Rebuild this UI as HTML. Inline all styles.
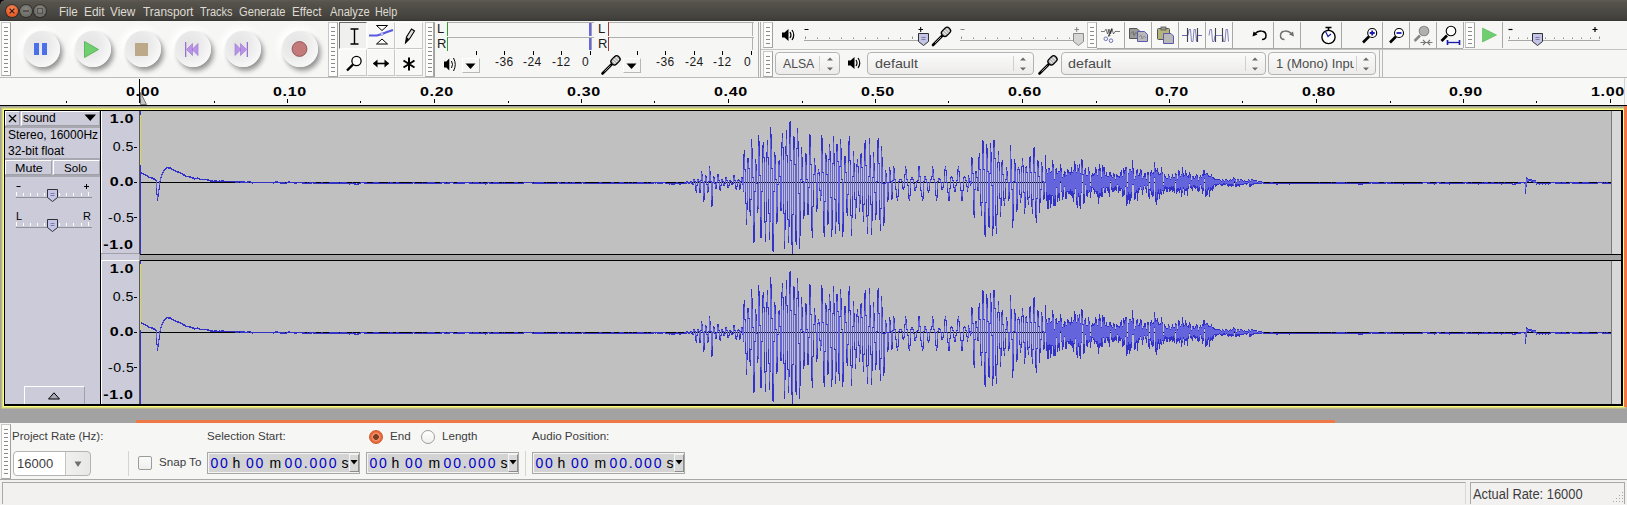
<!DOCTYPE html>
<html><head><meta charset="utf-8">
<style>
*{margin:0;padding:0;box-sizing:border-box}
html,body{width:1627px;height:505px;overflow:hidden;background:#f2f1f0;font-family:"Liberation Sans",sans-serif;position:relative}
.a{position:absolute}
.t{position:absolute;white-space:pre;line-height:1}
#menubar{left:0;top:0;width:1627px;height:21px;background:linear-gradient(#5e5b54 0,#56534c 12%,#4a4843 60%,#403e3a 92%,#353430 100%);}
.mi{position:absolute;top:5px;transform-origin:0 0;color:#dfdbd2;font-size:12px;line-height:14px;white-space:pre}
.wbtn{position:absolute;top:5px;width:12px;height:12px;border-radius:50%}
#tbarea{left:0;top:21px;width:1627px;height:57px;background:#f6f6f5}
.grab{position:absolute;width:10px;border:1px solid #c8c8c6;border-right-color:#a0a09e;border-bottom-color:#a8a8a6;background:#fdfdfd}
.grab:before{content:"";position:absolute;left:2px;width:4px;top:4px;bottom:3px;background:repeating-linear-gradient(#8a8a88 0 1px,transparent 1px 4px)}
.tb{position:absolute;width:36px;height:36px;border-radius:50%;background:radial-gradient(circle at 36% 36%,#e4e4e4 0,#ebebeb 40%,#f7f7f7 72%,#fdfdfd 100%);box-shadow:2.5px 3.5px 5px rgba(0,0,0,.42),-2px -2px 6px 3px rgba(255,255,255,.95)}
.btn{position:absolute;width:27px;height:27px;background:#f8f8f7;border:1px solid;border-color:#fdfdfd #c8c8c6 #c8c8c6 #fdfdfd}
.sep{position:absolute;width:1px;background:#c4c4c2}
.ml{position:absolute;font-size:12px;line-height:12px;color:#1a1a1a;white-space:pre}
#ruler{left:0;top:78px;width:1627px;height:27px;background:#f8f8f7}
.rl{position:absolute;top:86px;font-size:12px;font-weight:bold;letter-spacing:0.5px;transform:scaleX(1.34);transform-origin:0 0;line-height:12px;color:#000;white-space:pre}
.tk{position:absolute;width:1px;background:#000}
#trackarea{left:0;top:105px;width:1627px;height:318px;background:#a2a2a2;border-top:1px solid #000}
.lav{background:#cbcbd9}
.vr{position:absolute;font-size:12px;line-height:12px;color:#000;white-space:pre}
#seltb{left:0;top:423px;width:1627px;height:56px;background:#f6f6f5}
.sl{position:absolute;font-size:11.5px;line-height:12px;color:#3c3c3c;white-space:pre}
.tc{position:absolute;height:22px;border:1px solid #b0b0b0;background:#d2d2d2;box-shadow:inset 0 0 0 1px #e8e8e8}
.tcd{position:absolute;font-family:"Liberation Sans",sans-serif;font-size:14px;line-height:14px;white-space:pre;color:#0000cc;letter-spacing:1px}
#status{left:0;top:479px;width:1627px;height:26px;background:#f2f1f0;border-top:1px solid #a8a8a6}
</style></head><body>
<div id="menubar" class="a">
 <div class="a" style="left:0;top:0;width:4px;height:4px;background:radial-gradient(circle at 100% 100%,transparent 3px,#000 4px)"></div>
 <div class="wbtn" style="left:6px;background:radial-gradient(circle at 50% 35%,#f98b5d,#e4501e 80%);box-shadow:0 0 0 1px rgba(0,0,0,.35)"><svg class="a" style="left:0;top:0" width="12" height="12"><path d="M3.6 3.6L8.4 8.4M8.4 3.6L3.6 8.4" stroke="#3a1a0c" stroke-width="1.3"/></svg></div>
 <div class="wbtn" style="left:20px;background:radial-gradient(circle at 50% 35%,#86847e,#6b6964 80%);box-shadow:0 0 0 1px rgba(0,0,0,.35)"><div class="a" style="left:3px;top:5px;width:6px;height:2px;background:#55534e"></div></div>
 <div class="wbtn" style="left:34px;background:radial-gradient(circle at 50% 35%,#86847e,#6b6964 80%);box-shadow:0 0 0 1px rgba(0,0,0,.35)"><div class="a" style="left:3px;top:3px;width:6px;height:6px;border:1.5px solid #55534e"></div></div>
 <span class="mi" style="left:59px;transform:scaleX(0.97)">File</span>
 <span class="mi" style="left:84px;transform:scaleX(0.99)">Edit</span>
 <span class="mi" style="left:110px;transform:scaleX(0.98)">View</span>
 <span class="mi" style="left:143px;transform:scaleX(0.99)">Transport</span>
 <span class="mi" style="left:200px;transform:scaleX(0.91)">Tracks</span>
 <span class="mi" style="left:239px;transform:scaleX(0.93)">Generate</span>
 <span class="mi" style="left:292px;transform:scaleX(0.97)">Effect</span>
 <span class="mi" style="left:330px;transform:scaleX(0.93)">Analyze</span>
 <span class="mi" style="left:375px;transform:scaleX(0.9)">Help</span>
</div>
<div id="tbarea" class="a"></div>
<div class="a" style="left:0;top:77px;width:1627px;height:1px;background:#bcbcba"></div>
<!-- transport grabber -->
<div class="grab" style="left:1px;top:22px;height:54px"></div>
<div class="tb" style="left:23.5px;top:31px"></div>
<div class="tb" style="left:74.5px;top:31px"></div>
<div class="tb" style="left:124.5px;top:31px"></div>
<div class="tb" style="left:174.5px;top:31px"></div>
<div class="tb" style="left:224.5px;top:31px"></div>
<div class="tb" style="left:282px;top:31px"></div>
<svg class="a" style="left:0;top:21px" width="330" height="56">
 <g transform="translate(0,-21)">
 <rect x="34" y="43" width="5" height="12" fill="#4a6fe8"/><rect x="42" y="43" width="5" height="12" fill="#4a6fe8"/>
 <path d="M84.5 41.5L98.5 49.5L84.5 57.5Z" fill="#6fd06f" stroke="#4fa84f" stroke-width="0.8"/>
 <rect x="135" y="43" width="13" height="13" fill="#bba98a"/>
 <rect x="185" y="42" width="1.3" height="15" fill="#9a70d0"/>
 <path d="M186.5 49.5L192.5 43.5V55.5Z M192 49.5L198 43.5V55.5Z" fill="#b894e8" stroke="#9a70d0" stroke-width="0.6"/>
 <rect x="246.7" y="42" width="1.3" height="15" fill="#9a70d0"/>
 <path d="M246.5 49.5L240.5 43.5V55.5Z M241 49.5L235 43.5V55.5Z" fill="#b894e8" stroke="#9a70d0" stroke-width="0.6"/>
 <circle cx="299.5" cy="49" r="7.4" fill="#c47a7a" stroke="#8a4e4e" stroke-width="0.9"/>
 </g>
</svg>
<!-- tools -->
<div class="grab" style="left:328px;top:22px;height:55px"></div>
<div class="btn" style="left:339px;top:22px;width:28px;height:27px;border-color:#6a6a6a #fdfdfd #fdfdfd #6a6a6a;background:#f0f0ef"></div>
<div class="btn" style="left:367px;top:22px;width:28px"></div>
<div class="btn" style="left:395px;top:22px;width:28px"></div>
<div class="btn" style="left:339px;top:49px;width:28px"></div>
<div class="btn" style="left:367px;top:49px;width:28px"></div>
<div class="btn" style="left:395px;top:49px;width:28px"></div>
<svg class="a" style="left:339px;top:22px" width="84" height="56">
 <g transform="translate(-339,-22)">
 <path d="M350.5 29H358.5M354.5 29V44M350.5 44H358.5" stroke="#000" stroke-width="1.4" fill="none"/>
 <path d="M376.5 25.5H387.5L382 30.5Z M376.5 44H387.5L382 39Z" fill="#fff" stroke="#000" stroke-width="1"/>
 <path d="M369 35.5L377 35.5L382 34L387 32L393 30" stroke="#5a5ae0" stroke-width="2.2" fill="none"/>
 <circle cx="382" cy="34" r="1.3" fill="#fff" stroke="#5a5ae0" stroke-width=".6"/>
 <path d="M405.5 43L406.5 37L411.5 29L414.5 31L409.5 39Z" fill="#e0e0e0" stroke="#000" stroke-width="1.1"/>
 <path d="M405.5 43L406.5 37L409 39Z" fill="#000"/>
 <circle cx="356.5" cy="61" r="4.6" fill="#fff" stroke="#000" stroke-width="1.3"/>
 <path d="M353 64.5L347 70.5" stroke="#000" stroke-width="2.4"/>
 <path d="M373.5 63.5H388.5" stroke="#000" stroke-width="1.6"/>
 <path d="M373 63.5L377.5 59.5V67.5Z M389 63.5L384.5 59.5V67.5Z" fill="#000"/>
 <path d="M409 57.5V70.5M403.5 60.5L414.5 67.5M414.5 60.5L403.5 67.5" stroke="#000" stroke-width="2"/>
 </g>
</svg>
<div class="grab" style="left:425px;top:22px;height:55px"></div>
<!-- play meter -->
<div class="a" style="left:433px;top:22px;width:1px;height:55px;background:#a8a8a6"></div>
<div class="a" style="left:447px;top:22px;width:147px;height:1px;background:#b0b0ae"></div>
<div class="a" style="left:447px;top:37px;width:147px;height:1px;background:#b0b0ae"></div>
<div class="a" style="left:447px;top:22px;width:1px;height:14px;background:#30a030"></div>
<div class="a" style="left:447px;top:37px;width:1px;height:14px;background:#30a030"></div>
<div class="a" style="left:589px;top:23px;width:2px;height:13px;background:#6464f0"></div>
<div class="a" style="left:589px;top:38px;width:2px;height:12px;background:#6464f0"></div>
<div class="a" style="left:591px;top:23px;width:1px;height:13px;background:#a0a0a0"></div>
<div class="a" style="left:591px;top:38px;width:1px;height:12px;background:#a0a0a0"></div>
<span class="ml" style="left:437px;top:23px;font-size:13px">L</span>
<span class="ml" style="left:437px;top:38px;font-size:13px">R</span>
<svg class="a" style="left:433px;top:50px" width="330" height="28">
 <g transform="translate(-433,-50)" stroke="#000" stroke-width="1">
 <path d="M476.5 51V55M504.5 51V55M533.5 51V55M561.5 51V55M590.5 51V55"/>
 <path d="M637.5 51V55M665.5 51V55M694.5 51V55M722.5 51V55M751.5 51V55"/>
 </g>
</svg>
<span class="ml" style="left:495px;top:56px;letter-spacing:0.4px">-36</span>
<span class="ml" style="left:523px;top:56px;letter-spacing:0.4px">-24</span>
<span class="ml" style="left:552px;top:56px;letter-spacing:0.4px">-12</span>
<span class="ml" style="left:582px;top:56px">0</span>
<svg class="a" style="left:443px;top:56px" width="200" height="20">
 <g transform="translate(-443,-56)">
 <path d="M444 61.5H446.3L449.3 58.5V70.5L446.3 67.5H444Z" fill="#000"/>
 <path d="M451.5 61Q453.5 64.5 451.5 68M453.5 58Q457 64.5 453.5 71" stroke="#000" stroke-width="1" fill="none"/>
 </g>
</svg>
<div class="a" style="left:462px;top:58px;width:18px;height:15px;background:#f6f6f5;border:1px solid;border-color:#fff #b8b8b6 #b8b8b6 #fff"></div>
<svg class="a" style="left:462px;top:58px" width="18" height="15"><path d="M3.5 5.5H13.5L8.5 11Z" fill="#000"/></svg>
<!-- record meter -->
<div class="a" style="left:608px;top:22px;width:146px;height:1px;background:#b0b0ae"></div>
<div class="a" style="left:608px;top:37px;width:146px;height:1px;background:#b0b0ae"></div>
<div class="a" style="left:608px;top:22px;width:1px;height:14px;background:#a03838"></div>
<div class="a" style="left:608px;top:37px;width:1px;height:14px;background:#a03838"></div>
<div class="a" style="left:752px;top:23px;width:1px;height:13px;background:#b0b0ae"></div>
<div class="a" style="left:752px;top:38px;width:1px;height:12px;background:#b0b0ae"></div>
<span class="ml" style="left:598px;top:23px;font-size:13px">L</span>
<span class="ml" style="left:598px;top:38px;font-size:13px">R</span>
<span class="ml" style="left:656px;top:56px;letter-spacing:0.4px">-36</span>
<span class="ml" style="left:685px;top:56px;letter-spacing:0.4px">-24</span>
<span class="ml" style="left:713px;top:56px;letter-spacing:0.4px">-12</span>
<span class="ml" style="left:744px;top:56px">0</span>
<svg width="0" height="0" style="position:absolute"><defs><g id="mic">
<path d="M0.5 -0.5L9.5 -9.5" stroke="#000" stroke-width="2.6" stroke-linecap="round"/>
<path d="M2.5 -2.5L8.5 -8.5" stroke="#fff" stroke-width="0.6"/>
<rect x="10.2" y="-18.5" width="6.6" height="9.8" rx="3" transform="rotate(45 13.5 -13.6)" fill="#b8b8b8" stroke="#000" stroke-width="1.3"/>
<path d="M10.4 -13.4L13.4 -10.4M11.9 -15.4L15.4 -11.9M13.9 -16.9L16.9 -13.9" stroke="#fff" stroke-width="0.9"/>
</g></defs></svg>
<svg class="a" style="left:598px;top:52px" width="26" height="26"><use href="#mic" transform="translate(4,22)"/></svg>
<div class="a" style="left:623px;top:58px;width:18px;height:15px;background:#f6f6f5;border:1px solid;border-color:#fff #b8b8b6 #b8b8b6 #fff"></div>
<svg class="a" style="left:623px;top:58px" width="18" height="15"><path d="M3.5 5.5H13.5L8.5 11Z" fill="#000"/></svg>
<div class="a" style="left:758px;top:22px;width:1px;height:55px;background:#b0b0ae"></div>
<div class="a" style="left:760px;top:22px;width:1px;height:55px;background:#b0b0ae"></div>
<!-- mixer toolbar -->
<div class="grab" style="left:763px;top:22px;height:26px"></div>
<div class="a" style="left:761px;top:49px;width:866px;height:1px;background:#c4c4c2"></div>
<div class="grab" style="left:763px;top:51px;height:26px"></div>
<svg class="a" style="left:772px;top:22px" width="320" height="28">
 <g transform="translate(-772,-22)">
 <path d="M782 32.5H784.5L788.5 29V41L784.5 37.5H782Z" fill="#000"/>
 <path d="M790 32Q792 35 790 38M792 30Q795.5 35 792 40" stroke="#000" stroke-width="1.2" fill="none"/>
 <path d="M804 40.5H918" stroke="#a8a8a6" stroke-width="1"/>
 <path d="M805.5 36.5V39M817.5 37.5V39M829.5 37.5V39M841.5 37.5V39M853.5 37.5V39M865.5 37.5V39M877.5 37.5V39M888.5 37.5V39M900.5 37.5V39M912.5 36.5V39" stroke="#909090" stroke-width="1"/>
 <path d="M804.5 29.5H808.5" stroke="#000" stroke-width="1"/>
 <path d="M918.5 29.5H923M920.7 27V32" stroke="#000" stroke-width="1"/>
 <path d="M918.5 33.5H928.5V41.5L923.5 45.5L918.5 41.5Z" fill="#c4c4e6" stroke="#303030" stroke-width="1"/>
 <path d="M921.5 37.5H925.5M921.5 39.5H925.5" stroke="#6a6a90" stroke-width="0.8"/>
 <use href="#mic" transform="translate(932.5,45.5)"/>
 <path d="M960 40.5H1077" stroke="#a8a8a6" stroke-width="1"/>
 <path d="M961.5 36.5V39M973.5 37.5V39M985.5 37.5V39M997.5 37.5V39M1009.5 37.5V39M1021.5 37.5V39M1033.5 37.5V39M1045.5 37.5V39M1057.5 37.5V39M1069.5 37.5V39M1076.5 36.5V39" stroke="#909090" stroke-width="1"/>
 <path d="M960.5 29.5H964.5" stroke="#888" stroke-width="1"/>
 <path d="M1074.5 29.5H1079M1076.7 27V32" stroke="#888" stroke-width="1"/>
 <path d="M1073.5 33.5H1083.5V41.5L1078.5 45.5L1073.5 41.5Z" fill="#d6d6d6" stroke="#8a8a8a" stroke-width="1"/>
 </g>
</svg>
<!-- device toolbar -->
<div class="a" style="left:775px;top:52px;width:65px;height:23px;border:1px solid #b4b4b2;border-radius:4px;background:linear-gradient(#fbfbfb,#ecebea)"></div>
<div class="a" style="left:819px;top:56px;width:1px;height:15px;background:#d0d0ce"></div>
<span class="t" style="left:783px;top:57px;font-size:13px;color:#4c4c4c;transform:scaleX(.94);transform-origin:0 0">ALSA</span>
<svg class="a" style="left:824px;top:56px" width="12" height="16"><path d="M3 4.5L6 1.5L9 4.5ZM3 11.5L6 14.5L9 11.5Z" fill="#6a6a6a"/></svg>
<svg class="a" style="left:846px;top:53px" width="16" height="20">
 <path d="M2 7.5H4.5L8.5 4V16L4.5 12.5H2Z" fill="#000"/>
 <path d="M10 7Q12 10 10 13M12 5Q15.5 10 12 15" stroke="#000" stroke-width="1.2" fill="none"/>
</svg>
<div class="a" style="left:867px;top:52px;width:167px;height:23px;border:1px solid #b4b4b2;border-radius:4px;background:linear-gradient(#fbfbfb,#ecebea)"></div>
<div class="a" style="left:1013px;top:56px;width:1px;height:15px;background:#d0d0ce"></div>
<span class="t" style="left:875px;top:57px;font-size:13px;color:#4c4c4c;transform:scaleX(1.1);transform-origin:0 0">default</span>
<svg class="a" style="left:1017px;top:56px" width="12" height="16"><path d="M3 4.5L6 1.5L9 4.5ZM3 11.5L6 14.5L9 11.5Z" fill="#6a6a6a"/></svg>
<svg class="a" style="left:1036px;top:52px" width="24" height="26"><use href="#mic" transform="translate(3,22)"/></svg>
<div class="a" style="left:1061px;top:52px;width:205px;height:23px;border:1px solid #b4b4b2;border-radius:4px;background:linear-gradient(#fbfbfb,#ecebea)"></div>
<div class="a" style="left:1245px;top:56px;width:1px;height:15px;background:#d0d0ce"></div>
<span class="t" style="left:1068px;top:57px;font-size:13px;color:#4c4c4c;transform:scaleX(1.1);transform-origin:0 0">default</span>
<svg class="a" style="left:1249px;top:56px" width="12" height="16"><path d="M3 4.5L6 1.5L9 4.5ZM3 11.5L6 14.5L9 11.5Z" fill="#6a6a6a"/></svg>
<div class="a" style="left:1268px;top:52px;width:108px;height:23px;border:1px solid #b4b4b2;border-radius:4px;background:linear-gradient(#fbfbfb,#ecebea)"></div>
<div class="a" style="left:1356px;top:56px;width:1px;height:15px;background:#d0d0ce"></div>
<div class="a" style="left:1268px;top:52px;width:86px;height:23px;overflow:hidden"><span class="t" style="left:8px;top:5px;font-size:13px;color:#4c4c4c">1 (Mono) Input</span></div>
<svg class="a" style="left:1360px;top:56px" width="12" height="16"><path d="M3 4.5L6 1.5L9 4.5ZM3 11.5L6 14.5L9 11.5Z" fill="#6a6a6a"/></svg>
<div class="a" style="left:1379px;top:50px;width:1px;height:27px;background:#b8b8b6"></div>
<div class="a" style="left:1382px;top:50px;width:1px;height:27px;background:#b8b8b6"></div>
<!-- edit toolbar -->
<div class="grab" style="left:1087px;top:22px;height:26px"></div>
<div class="a" style="left:1097px;top:22px;width:135px;height:27px;background:#f8f8f7"></div>
<div class="a" style="left:1097px;top:48px;width:366px;height:1px;background:#a8a8a6"></div>
<svg class="a" style="left:1096px;top:21px" width="400" height="29">
 <g transform="translate(-1096,-21)">
 <path d="M1124.5 22V48M1151.5 22V48M1178.5 22V48M1205.5 22V48M1232.5 22V48M1273.5 22V48M1300.5 22V48M1341.5 22V48M1382.5 22V48M1409.5 22V48M1436.5 22V48M1463.5 22V48" stroke="#a8a8a6" stroke-width="1"/>
 <!-- cut -->
 <path d="M1101 31.5H1104.5L1106 29L1107.5 34L1109 29L1110.5 34L1112 29L1113.5 34L1115 31.5H1120" stroke="#444" stroke-width="0.7" fill="none"/>
 <path d="M1112 28.5L1108.5 36.5" stroke="#333" stroke-width="1.3"/>
 <path d="M1108 29.5L1110 36" stroke="#555" stroke-width="0.8"/>
 <circle cx="1105.8" cy="38.8" r="1.8" fill="none" stroke="#6464b4" stroke-width="0.9"/>
 <circle cx="1111" cy="40.7" r="1.8" fill="none" stroke="#6464b4" stroke-width="0.9"/>
 <!-- copy -->
 <path d="M1129.5 28.5H1137L1139.5 31V38.5H1129.5Z" fill="#9a9a9a" stroke="#555" stroke-width="1"/>
 <path d="M1137.5 31.5H1144.5L1147.5 34.5V41.5H1137.5Z" fill="#b8b8b8" stroke="#5a5ab0" stroke-width="1"/>
 <path d="M1139 37L1141 35L1142 39L1144 36L1146 38" stroke="#7a7a7a" stroke-width=".7" fill="none"/><path d="M1131 33.5L1133 31.5L1134 35.5L1136 32.5L1138 34.5" stroke="#5a5a5a" stroke-width=".7" fill="none"/>
 <!-- paste -->
 <rect x="1157.5" y="28.5" width="12" height="11" rx="1" fill="#b4b47c" stroke="#555" stroke-width="1"/>
 <rect x="1161" y="27" width="5" height="3" fill="#9a9a9a" stroke="#555" stroke-width=".8"/>
 <path d="M1163.5 33.5H1171L1173.5 36V43.5H1163.5Z" fill="#b8b8b8" stroke="#5a5ab0" stroke-width="1"/>
 <!-- trim -->
 <path d="M1182 35.5H1187.5M1197.5 35.5H1202" stroke="#6464b4" stroke-width="1"/>
 <path d="M1188 35.5L1189 29.5L1190.5 29.5L1191.5 41.5L1193 41.5L1194 29.5L1195.5 29.5L1196.5 41.5L1197 35.5" stroke="#6464b4" stroke-width="0.8" fill="none"/>
 <path d="M1187.5 28V42M1197.5 28V42" stroke="#444" stroke-width="1.1"/>
 <!-- silence -->
 <path d="M1209 35.5L1210 29.5L1211.5 29.5L1212.5 41.5L1214 41.5L1215 35.5H1222.5L1223.5 41.5L1225 41.5L1226 29.5L1227.5 29.5L1228.5 41.5" stroke="#6464b4" stroke-width="0.8" fill="none"/>
 <path d="M1215.5 28V42M1222.5 28V42" stroke="#444" stroke-width="1.1"/>
 <!-- undo / redo -->
 <path d="M1254.5 34Q1258 30.5 1261.5 31Q1266 31.5 1266 35.5Q1266 39.5 1262 39.5" stroke="#000" stroke-width="1.5" fill="none"/>
 <path d="M1252.5 36.5L1253.5 31.5L1257.5 34.5Z" fill="#000"/>
 <path d="M1292 34Q1288.5 30.5 1285 31Q1280.5 31.5 1280.5 35.5Q1280.5 39.5 1284.5 39.5" stroke="#707070" stroke-width="1.5" fill="none"/>
 <path d="M1294 36.5L1293 31.5L1289 34.5Z" fill="#707070"/>
 <!-- timer -->
 <circle cx="1328.5" cy="37" r="6.6" fill="#fff" stroke="#000" stroke-width="1.4"/>
 <path d="M1325.5 27.5H1331.5M1328.5 27.5V30.5" stroke="#000" stroke-width="1.6"/>
 <path d="M1325.5 31.5L1328 36.5L1331 34" stroke="#1a1ab0" stroke-width="1.2" fill="none"/>
 <!-- zoom in -->
 <path d="M1369 36.5L1363 42.5" stroke="#000" stroke-width="2.6"/>
 <circle cx="1372.2" cy="33" r="4.5" fill="#fff" stroke="#000" stroke-width="1.1"/>
 <path d="M1369.7 33H1374.7M1372.2 30.5V35.5" stroke="#1a1ab0" stroke-width="1.8"/>
 <!-- zoom out -->
 <path d="M1396 36.5L1390 42.5" stroke="#000" stroke-width="2.6"/>
 <circle cx="1399" cy="33" r="4.5" fill="#fff" stroke="#000" stroke-width="1.1"/>
 <path d="M1396.5 33H1401.5" stroke="#1a1ab0" stroke-width="1.8"/>
 <!-- fit sel -->
 <path d="M1420 35.5L1414.5 41" stroke="#888" stroke-width="2.6"/>
 <circle cx="1424" cy="31" r="4.8" fill="#b0b0b0" stroke="#888" stroke-width="1.1"/>
 <path d="M1420.5 42.5H1432.5" stroke="#777" stroke-width="1"/>
 <path d="M1423 40L1425.5 42.5L1423 45M1430 40L1427.5 42.5L1430 45" stroke="#777" stroke-width="1.1" fill="none"/>
 <!-- fit -->
 <path d="M1447 35.5L1441.5 41" stroke="#000" stroke-width="2.6"/>
 <circle cx="1451" cy="31" r="4.8" fill="#fff" stroke="#000" stroke-width="1.1"/>
 <path d="M1447.5 42.5H1460" stroke="#1a1ab0" stroke-width="1.3"/>
 <path d="M1447.5 40V45M1459.5 40V45" stroke="#1a1ab0" stroke-width="1.6"/>
 </g>
</svg>
<!-- play at speed -->
<div class="grab" style="left:1465px;top:22px;height:26px"></div>
<svg class="a" style="left:1475px;top:22px" width="152" height="27">
 <g transform="translate(-1475,-22)">
 <path d="M1502.5 22V48" stroke="#a8a8a6" stroke-width="1"/>
 <path d="M1482.5 28L1496.5 35L1482.5 42Z" fill="#6fcf6f" stroke="#58b058" stroke-width=".6"/>
 <path d="M1508.5 29.5H1512.5" stroke="#000" stroke-width="1.2"/>
 <path d="M1592.5 29.5H1597.5M1595 27V32" stroke="#000" stroke-width="1.2"/>
 <path d="M1508 40.5H1600" stroke="#a8a8a6" stroke-width="1"/>
 <path d="M1509.5 36.5V39M1518.5 37.5V39M1527.5 37.5V39M1545.5 37.5V39M1554.5 37.5V39M1563.5 37.5V39M1572.5 37.5V39M1581.5 37.5V39M1590.5 37.5V39M1599.5 36.5V39" stroke="#909090" stroke-width="1"/>
 <path d="M1532.5 33.5H1542.5V41.5L1537.5 45.5L1532.5 41.5Z" fill="#c4c4e6" stroke="#303030" stroke-width="1"/>
 <path d="M1535.5 37.5H1539.5M1535.5 39.5H1539.5" stroke="#6a6a90" stroke-width="0.8"/>
 </g>
</svg>
<div id="ruler" class="a"></div>
<span class="rl" style="left:126px">0.00</span>
<span class="rl" style="left:273px">0.10</span>
<span class="rl" style="left:420px">0.20</span>
<span class="rl" style="left:567px">0.30</span>
<span class="rl" style="left:714px">0.40</span>
<span class="rl" style="left:861px">0.50</span>
<span class="rl" style="left:1008px">0.60</span>
<span class="rl" style="left:1155px">0.70</span>
<span class="rl" style="left:1302px">0.80</span>
<span class="rl" style="left:1449px">0.90</span>
<span class="rl" style="left:1590.5px">1.00</span>
<svg class="a" style="left:0;top:78px" width="1627" height="27"><g transform="translate(0,-78)"><path d="M140.5 99V103 M287.5 99V103 M434.5 99V103 M581.5 99V103 M728.5 99V103 M875.5 99V103 M1022.5 99V103 M1169.5 99V103 M1316.5 99V103 M1463.5 99V103 M1610.5 99V103 M66.5 101V103 M214.5 101V103 M360.5 101V103 M508.5 101V103 M654.5 101V103 M802.5 101V103 M948.5 101V103 M1096.5 101V103 M1242.5 101V103 M1390.5 101V103 M1536.5 101V103" stroke="#000" stroke-width="1"/><path d="M139.5 79V103" stroke="#000" stroke-width="1"/><path d="M1624.5 78V105" stroke="#d4d4d2" stroke-width="1"/><path d="M140.5 92.5L146.5 104.5H140.5Z" fill="#c4c4c4" stroke="#606060" stroke-width=".8"/></g></svg>
<div id="trackarea" class="a"></div>
<div class="a" style="left:136px;top:420px;width:1199px;height:3px;background:#f07846"></div>
<div class="a" style="left:1px;top:107px;width:1625px;height:302px;border:1px solid #b9b98c"></div>
<div class="a" style="left:2px;top:108px;width:1623px;height:300px;border:1px solid #dada80"></div>
<div class="a" style="left:3px;top:109px;width:1621px;height:298px;border:1px solid #ffff80"></div>
<div class="a" style="left:1624px;top:106px;width:3px;height:301px;background:#f07846"></div>
<div class="a" style="left:4px;top:110px;width:1619px;height:296px;border:1px solid #000;border-right-width:2px;border-bottom-width:2px"></div>
<!-- track control panel -->
<div class="a lav" style="left:5px;top:111px;width:95px;height:293px"></div>
<div class="a" style="left:100px;top:111px;width:1px;height:293px;background:#000"></div>
<!-- close & name -->
<div class="a lav" style="left:5px;top:111px;width:15px;height:15px;border:1px solid;border-color:#fff #a0a0a8 #a0a0a8 #fff"></div>
<svg class="a" style="left:5px;top:111px" width="15" height="15"><path d="M4 4L11 11M11 4L4 11" stroke="#000" stroke-width="1.3"/></svg>
<div class="a lav" style="left:21px;top:111px;width:79px;height:15px;border:1px solid;border-color:#fff #a0a0a8 #a0a0a8 #fff"></div>
<span class="t" style="left:23px;top:112px;font-size:12px;color:#000">sound</span>
<svg class="a" style="left:84px;top:114px" width="13" height="8"><path d="M0.5 0.5H12L6.25 7Z" fill="#000"/></svg>
<div class="a" style="left:5px;top:126px;width:95px;height:2px;background:#a8a8b0"></div>
<span class="t" style="left:8px;top:129px;font-size:12px;color:#000">Stereo, 16000Hz</span>
<span class="t" style="left:8px;top:145px;font-size:12px;color:#000">32-bit float</span>
<div class="a" style="left:5px;top:158px;width:95px;height:2px;background:#a8a8b0"></div>
<div class="a lav" style="left:5px;top:160px;width:47px;height:15px;border:1px solid;border-color:#fff #a0a0a8 #a0a0a8 #fff"></div>
<div class="a lav" style="left:53px;top:160px;width:47px;height:15px;border:1px solid;border-color:#fff #a0a0a8 #a0a0a8 #fff"></div>
<span class="t" style="left:15px;top:162px;font-size:11.6px;color:#000;transform:scaleX(1.08);transform-origin:0 0">Mute</span>
<span class="t" style="left:64px;top:162px;font-size:11.6px;color:#000">Solo</span>
<div class="a" style="left:5px;top:175px;width:95px;height:2px;background:#a8a8b0"></div>
<svg class="a" style="left:5px;top:180px" width="95" height="55">
 <g transform="translate(-5,-180)">
 <path d="M16.5 186.5H20.5" stroke="#000" stroke-width="1"/>
 <path d="M84 186.5H89M86.5 184V189" stroke="#000" stroke-width="1"/>
 <path d="M16 197.5H92" stroke="#909098" stroke-width="1"/>
 <path d="M16.5 192V196M23.5 193V196M30.5 193V196M37.5 193V196M44.5 193V196M59.5 193V196M66.5 193V196M73.5 193V196M81.5 193V196M88.5 192V196" stroke="#fff" stroke-width="1"/>
 <path d="M47.5 189.5H57.5V197.5L52.5 201.5L47.5 197.5Z" fill="#c4c4e6" stroke="#303030" stroke-width="1"/>
 <path d="M50.5 193.5H54.5M50.5 195.5H54.5" stroke="#6a6a90" stroke-width="0.8"/>
 <path d="M16 227.5H92" stroke="#909098" stroke-width="1"/>
 <path d="M16.5 222V226M23.5 223V226M30.5 223V226M37.5 223V226M44.5 223V226M59.5 223V226M66.5 223V226M73.5 223V226M81.5 223V226M88.5 222V226" stroke="#fff" stroke-width="1"/>
 <path d="M47.5 219.5H57.5V227.5L52.5 231.5L47.5 227.5Z" fill="#c4c4e6" stroke="#303030" stroke-width="1"/>
 <path d="M50.5 223.5H54.5M50.5 225.5H54.5" stroke="#6a6a90" stroke-width="0.8"/>
 </g>
</svg>
<span class="t" style="left:16px;top:211px;font-size:11px;color:#000">L</span>
<span class="t" style="left:83px;top:211px;font-size:11px;color:#000">R</span>
<!-- collapse button -->
<div class="a lav" style="left:24px;top:386px;width:61px;height:18px;border:1px solid;border-color:#fff #a0a0a8 #a0a0a8 #fff;border-bottom:none"></div>
<svg class="a" style="left:48px;top:392px" width="13" height="8"><path d="M0.5 7H11.5L6 0.8Z" fill="#a8a8b8" stroke="#000" stroke-width="1"/></svg>
<!-- vertical rulers -->
<div class="a lav" style="left:101px;top:111px;width:38px;height:293px"></div>
<div class="a" style="left:101px;top:111px;width:1px;height:143px;background:#fff"></div>
<div class="a" style="left:101px;top:253px;width:38px;height:1px;background:#a0a0a8"></div>
<div class="a" style="left:101px;top:260px;width:38px;height:1px;background:#fff"></div>
<div class="a" style="left:101px;top:261px;width:1px;height:143px;background:#fff"></div>
<div class="a" style="left:139px;top:111px;width:1px;height:143px;background:#555"></div>
<div class="a" style="left:139px;top:261px;width:1px;height:143px;background:#555"></div>
<span class="vr" style="right:1493px;top:113px;transform-origin:100% 0;font-weight:bold;transform:scaleX(1.34);letter-spacing:0.5px">1.0</span>
<span class="vr" style="right:1493px;top:141px;transform-origin:100% 0;font-weight:normal;transform:scaleX(1.18);letter-spacing:0.4px">0.5</span>
<span class="vr" style="right:1493px;top:176px;transform-origin:100% 0;font-weight:bold;transform:scaleX(1.34);letter-spacing:0.5px">0.0</span>
<span class="vr" style="right:1493px;top:212px;transform-origin:100% 0;font-weight:normal;transform:scaleX(1.18);letter-spacing:0.4px">-0.5</span>
<span class="vr" style="right:1493px;top:239px;transform-origin:100% 0;font-weight:bold;transform:scaleX(1.34);letter-spacing:0.5px">-1.0</span>
<span class="vr" style="right:1493px;top:263px;transform-origin:100% 0;font-weight:bold;transform:scaleX(1.34);letter-spacing:0.5px">1.0</span>
<span class="vr" style="right:1493px;top:291px;transform-origin:100% 0;font-weight:normal;transform:scaleX(1.18);letter-spacing:0.4px">0.5</span>
<span class="vr" style="right:1493px;top:326px;transform-origin:100% 0;font-weight:bold;transform:scaleX(1.34);letter-spacing:0.5px">0.0</span>
<span class="vr" style="right:1493px;top:362px;transform-origin:100% 0;font-weight:normal;transform:scaleX(1.18);letter-spacing:0.4px">-0.5</span>
<span class="vr" style="right:1493px;top:389px;transform-origin:100% 0;font-weight:bold;transform:scaleX(1.34);letter-spacing:0.5px">-1.0</span>
<svg class="a" style="left:0;top:0" width="140" height="410"><path d="M134 147.5H137 M134 182.5H137 M134 217.5H137 M134 297.5H137 M134 332.5H137 M134 367.5H137" stroke="#000" stroke-width="1"/></svg>
<div class="a" style="left:140px;top:111px;width:1471px;height:143px;background:#c0c0c0"></div>
<div class="a" style="left:1611px;top:111px;width:1px;height:143px;background:#7a7a7a"></div>
<div class="a" style="left:1612px;top:111px;width:9px;height:143px;background:#d8d8d8"></div>
<div class="a" style="left:140px;top:182px;width:1471px;height:1px;background:#000"></div>
<div class="a" style="left:140px;top:261px;width:1471px;height:143px;background:#c0c0c0"></div>
<div class="a" style="left:1611px;top:261px;width:1px;height:143px;background:#7a7a7a"></div>
<div class="a" style="left:1612px;top:261px;width:9px;height:143px;background:#d8d8d8"></div>
<div class="a" style="left:140px;top:332px;width:1471px;height:1px;background:#000"></div>
<div class="a" style="left:140px;top:254px;width:1481px;height:1px;background:#000"></div>
<div class="a" style="left:140px;top:255px;width:1481px;height:5px;background:#a6a6a6"></div>
<div class="a" style="left:140px;top:260px;width:1481px;height:1px;background:#000"></div>
<svg class="a" style="left:0;top:0" width="1627" height="410" shape-rendering="crispEdges"><path d="M141.5 172V174M142.5 173V174M143.5 173V175M144.5 174V175M145.5 174V176M146.5 175V176M147.5 175V177M148.5 176V178M149.5 177V178M150.5 177V178M151.5 177V179M152.5 177V179M153.5 178V180M154.5 178V180M155.5 179V181M156.5 180V195M157.5 194V201M158.5 189V197M159.5 181V190M160.5 177V182M161.5 174V178M162.5 172V175M163.5 170V173M164.5 169V171M165.5 168V170M166.5 167V169M167.5 167V168M168.5 167V169M169.5 167V169M170.5 167V169M171.5 168V170M172.5 169V170M173.5 169V171M174.5 170V171M175.5 170V172M176.5 171V172M177.5 171V173M178.5 171V173M179.5 172V173M180.5 172V174M181.5 173V174M182.5 173V175M183.5 174V176M184.5 174V176M185.5 175V177M186.5 176V177M187.5 176V177M188.5 176V177M189.5 176V178M190.5 176V178M191.5 177V178M192.5 177V179M193.5 177V179M194.5 178V180M195.5 178V179M196.5 178V179M197.5 177V179M198.5 178V179M199.5 178V180M200.5 179V180M201.5 179V180M202.5 179V180M203.5 179V180M204.5 179V180M205.5 179V180M206.5 179V180M207.5 179V181M208.5 179V181M209.5 180V181M210.5 180V182M211.5 180V182M212.5 180V182M213.5 181V182M214.5 180V182M215.5 180V182M216.5 180V182M217.5 181V182M218.5 181V182M219.5 180V182M220.5 181V182M221.5 180V182M222.5 180V182M223.5 180V182M224.5 181V182M225.5 181V182M226.5 181V182M227.5 181V182M228.5 181V182M229.5 181V182M230.5 181V182M231.5 181V182M232.5 181V182M233.5 181V182M234.5 181V182M235.5 181V183M236.5 181V183M237.5 181V183M238.5 181V183M239.5 181V182M240.5 181V183M241.5 181V183M242.5 181V183M243.5 181V183M244.5 181V183M245.5 182V183M246.5 182V183M247.5 181V183M248.5 181V183M249.5 181V182M250.5 181V183M251.5 182V183M252.5 182V184M253.5 182V183M254.5 182V183M255.5 182V183M256.5 182V183M257.5 182V183M258.5 182V183M259.5 182V183M260.5 182V183M261.5 182V183M262.5 182V183M263.5 182V183M264.5 182V183M265.5 182V183M266.5 182V183M267.5 182V183M268.5 182V183M269.5 182V183M270.5 182V183M271.5 182V183M272.5 182V183M273.5 182V184M274.5 182V183M275.5 181V183M276.5 181V183M277.5 181V183M278.5 182V183M279.5 182V183M280.5 182V184M281.5 182V184M282.5 182V184M283.5 182V184M284.5 182V184M285.5 183V184M286.5 182V184M287.5 182V183M288.5 181V183M289.5 181V183M290.5 182V183M291.5 182V183M292.5 182V183M293.5 182V183M294.5 182V184M295.5 182V184M296.5 182V184M297.5 182V183M298.5 182V183M299.5 182V183M300.5 182V183M301.5 182V183M302.5 182V184M303.5 182V184M304.5 182V184M305.5 183V184M306.5 183V184M307.5 182V184M308.5 183V184M309.5 182V184M310.5 182V184M311.5 182V184M312.5 182V183M313.5 182V184M314.5 182V184M315.5 182V184M316.5 183V184M317.5 183V184M318.5 183V184M319.5 183V184M320.5 183V184M321.5 182V184M322.5 182V184M323.5 183V184M324.5 183V184M325.5 183V184M326.5 183V184M327.5 183V184M328.5 183V184M329.5 182V184M330.5 182V184M331.5 182V184M332.5 182V184M333.5 182V184M334.5 182V184M335.5 182V184M336.5 182V184M337.5 182V184M338.5 182V184M339.5 183V184M340.5 182V184M341.5 182V184M342.5 182V184M343.5 182V184M344.5 182V184M345.5 182V184M346.5 182V184M347.5 183V184M348.5 183V184M349.5 183V185M350.5 183V184M351.5 183V184M352.5 182V184M353.5 183V184M354.5 183V185M355.5 183V185M356.5 184V185M357.5 183V185M358.5 183V185M359.5 183V184M360.5 182V184M361.5 182V183M362.5 182V183M363.5 182V183M364.5 182V184M365.5 182V184M366.5 182V184M367.5 183V184M368.5 183V184M369.5 183V184M370.5 183V184M371.5 183V184M372.5 183V184M373.5 182V184M374.5 182V184M375.5 182V184M376.5 182V184M377.5 182V184M378.5 182V184M379.5 183V184M380.5 183V184M381.5 183V184M382.5 183V184M383.5 183V184M384.5 183V184M385.5 183V184M386.5 183V184M387.5 183V184M388.5 182V184M389.5 183V184M390.5 182V184M391.5 182V184M392.5 182V184M393.5 183V184M394.5 183V184M395.5 183V184M396.5 182V184M397.5 182V184M398.5 182V184M399.5 183V184M400.5 183V184M401.5 183V184M402.5 183V184M403.5 183V184M404.5 183V184M405.5 183V184M406.5 183V184M407.5 183V184M408.5 183V184M409.5 183V184M410.5 183V184M411.5 183V184M412.5 182V184M413.5 182V183M414.5 182V184M415.5 183V184M416.5 183V184M417.5 183V184M418.5 183V184M419.5 183V184M420.5 183V184M421.5 183V184M422.5 182V184M423.5 183V184M424.5 183V184M425.5 183V184M426.5 183V184M427.5 182V184M428.5 182V184M429.5 182V184M430.5 182V184M431.5 182V184M432.5 182V184M433.5 182V184M434.5 182V184M435.5 183V184M436.5 183V184M437.5 183V184M438.5 183V184M439.5 183V184M440.5 182V184M441.5 182V184M442.5 182V183M443.5 182V183M444.5 182V184M445.5 182V184M446.5 183V184M447.5 182V184M448.5 182V184M449.5 182V184M450.5 182V183M451.5 182V183M452.5 182V183M453.5 182V184M454.5 183V184M455.5 183V184M456.5 183V184M457.5 182V184M458.5 182V184M459.5 182V184M460.5 182V184M461.5 182V184M462.5 182V184M463.5 182V184M464.5 182V184M465.5 182V183M466.5 182V183M467.5 182V183M468.5 182V183M469.5 182V184M470.5 182V184M471.5 182V184M472.5 183V184M473.5 182V184M474.5 182V184M475.5 182V184M476.5 182V184M477.5 182V184M478.5 182V184M479.5 183V184M480.5 183V184M481.5 182V184M482.5 182V184M483.5 183V184M484.5 183V184M485.5 183V185M486.5 183V184M487.5 182V184M488.5 182V183M489.5 182V184M490.5 182V184M491.5 183V184M492.5 183V184M493.5 182V184M494.5 182V184M495.5 182V184M496.5 182V184M497.5 182V184M498.5 182V184M499.5 183V184M500.5 183V184M501.5 183V184M502.5 182V184M503.5 183V184M504.5 182V184M505.5 183V184M506.5 183V184M507.5 183V184M508.5 183V184M509.5 183V184M510.5 183V184M511.5 183V184M512.5 183V184M513.5 183V184M514.5 182V184M515.5 182V184M516.5 182V184M517.5 182V184M518.5 183V184M519.5 183V184M520.5 183V184M521.5 183V184M522.5 183V184M523.5 182V184M524.5 182V183M525.5 182V183M526.5 182V183M527.5 182V183M528.5 182V183M529.5 182V183M530.5 182V183M531.5 182V183M532.5 182V184M533.5 183V184M534.5 182V184M535.5 182V184M536.5 182V184M537.5 182V184M538.5 182V184M539.5 182V184M540.5 182V184M541.5 182V184M542.5 182V184M543.5 182V184M544.5 183V184M545.5 183V184M546.5 182V184M547.5 183V184M548.5 183V184M549.5 183V184M550.5 183V184M551.5 183V184M552.5 183V184M553.5 183V184M554.5 183V184M555.5 183V184M556.5 183V184M557.5 182V184M558.5 182V183M559.5 182V184M560.5 182V184M561.5 183V184M562.5 183V184M563.5 183V184M564.5 183V184M565.5 182V184M566.5 182V184M567.5 182V184M568.5 183V184M569.5 183V184M570.5 182V184M571.5 183V184M572.5 182V184M573.5 182V184M574.5 182V184M575.5 183V184M576.5 183V184M577.5 183V184M578.5 183V184M579.5 183V184M580.5 183V184M581.5 182V184M582.5 182V183M583.5 182V184M584.5 182V184M585.5 183V184M586.5 183V184M587.5 183V184M588.5 183V184M589.5 183V184M590.5 183V184M591.5 183V184M592.5 183V184M593.5 183V184M594.5 183V184M595.5 183V184M596.5 183V184M597.5 183V184M598.5 183V184M599.5 182V184M600.5 182V184M601.5 182V184M602.5 183V184M603.5 183V184M604.5 183V184M605.5 183V184M606.5 183V184M607.5 183V184M608.5 183V184M609.5 183V184M610.5 183V184M611.5 182V184M612.5 182V184M613.5 182V184M614.5 183V184M615.5 183V184M616.5 183V184M617.5 183V184M618.5 183V184M619.5 182V184M620.5 182V184M621.5 182V184M622.5 182V184M623.5 182V184M624.5 183V184M625.5 183V184M626.5 183V184M627.5 183V184M628.5 182V184M629.5 183V184M630.5 183V184M631.5 183V184M632.5 182V184M633.5 183V184M634.5 183V184M635.5 183V184M636.5 183V184M637.5 182V184M638.5 182V184M639.5 182V184M640.5 182V184M641.5 182V184M642.5 182V184M643.5 182V184M644.5 183V184M645.5 183V184M646.5 183V184M647.5 182V184M648.5 183V184M649.5 183V184M650.5 183V184M651.5 182V184M652.5 182V184M653.5 182V184M654.5 182V183M655.5 182V184M656.5 182V183M657.5 182V184M658.5 182V184M659.5 182V184M660.5 182V184M661.5 182V184M662.5 182V184M663.5 182V183M664.5 182V183M665.5 182V184M666.5 183V184M667.5 183V184M668.5 183V184M669.5 183V185M670.5 183V184M671.5 183V185M672.5 183V185M673.5 183V185M674.5 183V185M675.5 183V184M676.5 182V184M677.5 182V184M678.5 183V184M679.5 183V185M680.5 183V185M681.5 183V184M682.5 183V184M683.5 183V184M684.5 182V184M685.5 182V184M686.5 181V184M687.5 181V183M688.5 182V184M689.5 182V184M690.5 181V183M691.5 181V184M692.5 183V185M693.5 179V185M694.5 179V182M695.5 181V191M696.5 185V193M697.5 179V186M698.5 179V182M699.5 181V193M700.5 180V193M701.5 171V181M702.5 174V183M703.5 182V202M704.5 181V200M705.5 175V182M706.5 176V185M707.5 184V193M708.5 181V192M709.5 166V182M710.5 171V182M711.5 181V207M712.5 182V206M713.5 176V183M714.5 177V184M715.5 183V189M716.5 182V189M717.5 174V183M718.5 174V181M719.5 180V190M720.5 185V191M721.5 179V186M722.5 179V182M723.5 181V186M724.5 183V186M725.5 177V184M726.5 177V181M727.5 180V188M728.5 185V188M729.5 180V186M730.5 180V182M731.5 181V185M732.5 183V185M733.5 175V184M734.5 175V181M735.5 180V189M736.5 186V190M737.5 180V187M738.5 179V181M739.5 180V190M740.5 181V189M741.5 177V182M742.5 177V185M743.5 154V192M744.5 150V170M745.5 169V204M746.5 203V225M747.5 158V210M748.5 158V169M749.5 168V212M750.5 199V216M751.5 139V200M752.5 148V178M753.5 177V243M754.5 191V242M755.5 159V192M756.5 164V184M757.5 183V213M758.5 135V209M759.5 141V176M760.5 175V238M761.5 191V238M762.5 145V192M763.5 142V158M764.5 157V223M765.5 221V242M766.5 152V222M767.5 140V158M768.5 157V214M769.5 213V240M770.5 127V222M771.5 134V169M772.5 168V251M773.5 191V252M774.5 152V192M775.5 155V180M776.5 179V224M777.5 184V222M778.5 161V185M779.5 160V177M780.5 176V211M781.5 142V211M782.5 133V148M783.5 147V214M784.5 213V249M785.5 146V230M786.5 130V156M787.5 155V220M788.5 219V243M789.5 122V227M790.5 121V161M791.5 160V245M792.5 214V254M793.5 136V215M794.5 137V165M795.5 164V242M796.5 148V245M797.5 128V149M798.5 141V194M799.5 193V249M800.5 179V236M801.5 147V180M802.5 157V182M803.5 181V219M804.5 182V216M805.5 153V183M806.5 154V180M807.5 179V215M808.5 187V215M809.5 134V188M810.5 135V165M811.5 164V231M812.5 206V238M813.5 174V207M814.5 158V175M815.5 165V183M816.5 182V212M817.5 173V209M818.5 169V174M819.5 172V191M820.5 190V201M821.5 135V196M822.5 138V173M823.5 172V233M824.5 201V237M825.5 153V202M826.5 155V175M827.5 174V225M828.5 159V224M829.5 144V160M830.5 151V198M831.5 197V237M832.5 163V230M833.5 136V164M834.5 153V200M835.5 199V234M836.5 144V222M837.5 144V162M838.5 161V224M839.5 166V231M840.5 139V167M841.5 148V180M842.5 179V237M843.5 182V232M844.5 156V183M845.5 156V173M846.5 172V213M847.5 194V216M848.5 141V195M849.5 136V161M850.5 160V216M851.5 215V236M852.5 176V218M853.5 151V177M854.5 163V200M855.5 199V219M856.5 164V208M857.5 159V167M858.5 166V196M859.5 195V212M860.5 154V204M861.5 153V168M862.5 167V212M863.5 204V222M864.5 143V205M865.5 140V166M866.5 165V217M867.5 215V234M868.5 176V216M869.5 138V177M870.5 155V205M871.5 204V235M872.5 177V221M873.5 152V178M874.5 163V193M875.5 192V220M876.5 181V215M877.5 140V182M878.5 138V164M879.5 163V220M880.5 208V231M881.5 146V209M882.5 157V184M883.5 183V226M884.5 183V223M885.5 170V184M886.5 173V183M887.5 182V202M888.5 182V200M889.5 167V183M890.5 170V182M891.5 181V200M892.5 180V199M893.5 166V181M894.5 168V180M895.5 179V190M896.5 189V198M897.5 196V201M898.5 181V197M899.5 179V182M900.5 179V180M901.5 179V182M902.5 181V189M903.5 187V190M904.5 174V188M905.5 166V175M906.5 169V180M907.5 179V186M908.5 185V199M909.5 195V201M910.5 179V196M911.5 177V180M912.5 177V180M913.5 179V184M914.5 183V191M915.5 187V191M916.5 181V188M917.5 180V182M918.5 166V181M919.5 166V177M920.5 176V191M921.5 190V197M922.5 196V201M923.5 181V199M924.5 176V182M925.5 176V180M926.5 179V183M927.5 182V191M928.5 190V193M929.5 182V191M930.5 179V183M931.5 176V180M932.5 166V177M933.5 169V180M934.5 179V183M935.5 182V196M936.5 195V201M937.5 181V198M938.5 178V182M939.5 178V180M940.5 179V183M941.5 182V190M942.5 187V190M943.5 182V188M944.5 169V183M945.5 166V171M946.5 170V183M947.5 182V193M948.5 192V201M949.5 188V201M950.5 177V189M951.5 176V178M952.5 177V181M953.5 180V188M954.5 187V192M955.5 185V192M956.5 180V186M957.5 169V181M958.5 166V172M959.5 171V183M960.5 182V191M961.5 190V201M962.5 190V201M963.5 177V191M964.5 176V178M965.5 177V181M966.5 180V187M967.5 186V192M968.5 175V188M969.5 178V182M970.5 181V186M971.5 157V184M972.5 158V174M973.5 173V215M974.5 189V218M975.5 171V190M976.5 171V178M977.5 177V191M978.5 157V191M979.5 153V170M980.5 169V206M981.5 202V216M982.5 140V203M983.5 141V170M984.5 169V235M985.5 202V237M986.5 144V203M987.5 148V172M988.5 171V227M989.5 173V228M990.5 143V174M991.5 152V186M992.5 185V236M993.5 140V229M994.5 140V159M995.5 158V226M996.5 214V234M997.5 162V215M998.5 151V163M999.5 162V199M1000.5 198V217M1001.5 162V206M1002.5 160V175M1003.5 174V201M1004.5 198V206M1005.5 179V199M1006.5 167V180M1007.5 171V183M1008.5 182V201M1009.5 182V199M1010.5 145V183M1011.5 159V190M1012.5 189V228M1013.5 181V221M1014.5 159V182M1015.5 163V183M1016.5 182V212M1017.5 169V210M1018.5 167V170M1019.5 169V195M1020.5 194V203M1021.5 166V198M1022.5 158V167M1023.5 165V193M1024.5 192V214M1025.5 167V208M1026.5 166V173M1027.5 172V200M1028.5 197V205M1029.5 157V198M1030.5 156V173M1031.5 172V207M1032.5 199V214M1033.5 148V200M1034.5 147V173M1035.5 172V218M1036.5 198V223M1037.5 160V199M1038.5 161V177M1039.5 176V213M1040.5 189V203M1041.5 162V190M1042.5 166V182M1043.5 181V200M1044.5 182V199M1045.5 155V183M1046.5 169V201M1047.5 173V209M1048.5 168V209M1049.5 168V200M1050.5 172V208M1051.5 171V204M1052.5 160V196M1053.5 164V206M1054.5 179V206M1055.5 169V206M1056.5 168V188M1057.5 173V202M1058.5 171V198M1059.5 171V201M1060.5 164V182M1061.5 168V192M1062.5 177V200M1063.5 174V197M1064.5 171V187M1065.5 172V199M1066.5 175V199M1067.5 169V192M1068.5 170V194M1069.5 172V194M1070.5 172V195M1071.5 167V196M1072.5 172V198M1073.5 170V202M1074.5 161V194M1075.5 164V189M1076.5 172V205M1077.5 165V208M1078.5 168V197M1079.5 164V206M1080.5 173V209M1081.5 159V193M1082.5 160V175M1083.5 174V204M1084.5 170V203M1085.5 168V185M1086.5 175V196M1087.5 175V197M1088.5 167V193M1089.5 171V192M1090.5 186V198M1091.5 175V192M1092.5 173V188M1093.5 174V190M1094.5 173V194M1095.5 167V192M1096.5 169V194M1097.5 175V197M1098.5 169V204M1099.5 164V198M1100.5 168V196M1101.5 177V197M1102.5 165V197M1103.5 167V188M1104.5 167V193M1105.5 175V193M1106.5 172V188M1107.5 176V191M1108.5 176V193M1109.5 172V197M1110.5 172V181M1111.5 175V190M1112.5 177V192M1113.5 173V192M1114.5 174V191M1115.5 179V190M1116.5 174V191M1117.5 175V185M1118.5 176V193M1119.5 176V191M1120.5 172V191M1121.5 170V189M1122.5 176V197M1123.5 168V196M1124.5 170V195M1125.5 167V187M1126.5 167V206M1127.5 187V204M1128.5 173V200M1129.5 169V204M1130.5 169V201M1131.5 171V198M1132.5 160V185M1133.5 168V185M1134.5 179V200M1135.5 176V199M1136.5 170V193M1137.5 169V201M1138.5 175V193M1139.5 173V190M1140.5 169V187M1141.5 170V190M1142.5 178V195M1143.5 176V190M1144.5 173V186M1145.5 173V189M1146.5 179V193M1147.5 172V186M1148.5 172V197M1149.5 189V199M1150.5 172V191M1151.5 170V195M1152.5 173V197M1153.5 172V196M1154.5 162V178M1155.5 168V202M1156.5 170V205M1157.5 168V200M1158.5 172V194M1159.5 174V199M1160.5 173V194M1161.5 167V195M1162.5 172V191M1163.5 185V194M1164.5 174V191M1165.5 176V189M1166.5 178V192M1167.5 178V192M1168.5 174V189M1169.5 176V192M1170.5 179V191M1171.5 177V190M1172.5 174V192M1173.5 177V191M1174.5 177V193M1175.5 173V181M1176.5 174V194M1177.5 179V192M1178.5 170V191M1179.5 171V193M1180.5 176V190M1181.5 174V197M1182.5 167V193M1183.5 173V189M1184.5 175V195M1185.5 170V191M1186.5 173V191M1187.5 176V196M1188.5 175V189M1189.5 172V184M1190.5 174V188M1191.5 180V189M1192.5 176V191M1193.5 176V187M1194.5 178V188M1195.5 176V189M1196.5 174V188M1197.5 175V191M1198.5 180V192M1199.5 177V191M1200.5 175V185M1201.5 177V189M1202.5 174V194M1203.5 170V191M1204.5 170V179M1205.5 174V197M1206.5 173V196M1207.5 173V195M1208.5 175V190M1209.5 176V197M1210.5 176V191M1211.5 174V190M1212.5 177V191M1213.5 177V189M1214.5 178V185M1215.5 179V187M1216.5 179V186M1217.5 179V185M1218.5 179V185M1219.5 179V184M1220.5 180V185M1221.5 181V186M1222.5 179V186M1223.5 180V185M1224.5 181V185M1225.5 179V185M1226.5 179V184M1227.5 180V186M1228.5 181V187M1229.5 180V186M1230.5 179V186M1231.5 180V187M1232.5 179V186M1233.5 177V186M1234.5 178V182M1235.5 179V187M1236.5 182V187M1237.5 179V186M1238.5 179V186M1239.5 181V187M1240.5 179V185M1241.5 179V185M1242.5 180V185M1243.5 181V185M1244.5 180V184M1245.5 181V184M1246.5 181V185M1247.5 181V184M1248.5 179V183M1249.5 180V187M1250.5 181V187M1251.5 179V186M1252.5 179V185M1253.5 180V185M1254.5 180V184M1255.5 180V184M1256.5 180V184M1257.5 182V184M1258.5 181V184M1259.5 181V184M1260.5 181V184M1261.5 181V184M1262.5 182V183M1263.5 182V184M1264.5 183V184M1265.5 183V184M1266.5 183V184M1267.5 183V184M1268.5 183V184M1269.5 183V184M1270.5 182V184M1271.5 182V184M1272.5 182V184M1273.5 183V184M1274.5 183V184M1275.5 183V184M1276.5 183V185M1277.5 183V185M1278.5 183V184M1279.5 183V184M1280.5 183V184M1281.5 183V184M1282.5 183V184M1283.5 183V184M1284.5 183V184M1285.5 183V184M1286.5 183V184M1287.5 183V184M1288.5 183V184M1289.5 183V185M1290.5 183V184M1291.5 183V184M1292.5 183V184M1293.5 183V184M1294.5 183V184M1295.5 183V184M1296.5 183V184M1297.5 183V184M1298.5 183V184M1299.5 183V184M1300.5 183V184M1301.5 183V184M1302.5 183V184M1303.5 183V184M1304.5 183V184M1305.5 183V184M1306.5 183V184M1307.5 183V184M1308.5 183V184M1309.5 183V184M1310.5 183V184M1311.5 183V184M1312.5 183V184M1313.5 183V184M1314.5 183V184M1315.5 183V184M1316.5 183V184M1317.5 183V184M1318.5 183V184M1319.5 182V184M1320.5 183V184M1321.5 183V184M1322.5 183V184M1323.5 183V184M1324.5 183V184M1325.5 183V184M1326.5 183V184M1327.5 183V184M1328.5 183V184M1329.5 183V184M1330.5 183V184M1331.5 182V184M1332.5 183V184M1333.5 183V184M1334.5 183V184M1335.5 183V184M1336.5 182V184M1337.5 182V184M1338.5 182V184M1339.5 182V184M1340.5 182V184M1341.5 182V184M1342.5 182V184M1343.5 182V184M1344.5 182V184M1345.5 183V184M1346.5 182V184M1347.5 183V184M1348.5 183V184M1349.5 183V184M1350.5 183V184M1351.5 183V184M1352.5 183V184M1353.5 183V184M1354.5 183V184M1355.5 183V184M1356.5 183V184M1357.5 183V184M1358.5 183V185M1359.5 183V185M1360.5 183V185M1361.5 183V185M1362.5 183V185M1363.5 183V184M1364.5 183V184M1365.5 183V184M1366.5 183V184M1367.5 183V184M1368.5 183V184M1369.5 182V184M1370.5 182V184M1371.5 182V183M1372.5 182V184M1373.5 182V184M1374.5 182V184M1375.5 182V184M1376.5 182V184M1377.5 182V184M1378.5 182V184M1379.5 183V184M1380.5 183V184M1381.5 183V184M1382.5 183V184M1383.5 183V184M1384.5 182V184M1385.5 182V184M1386.5 182V183M1387.5 182V184M1388.5 182V184M1389.5 182V184M1390.5 182V184M1391.5 183V184M1392.5 183V184M1393.5 182V184M1394.5 183V184M1395.5 183V184M1396.5 183V184M1397.5 183V184M1398.5 183V184M1399.5 183V184M1400.5 183V184M1401.5 183V184M1402.5 183V184M1403.5 183V185M1404.5 183V184M1405.5 183V184M1406.5 183V184M1407.5 183V184M1408.5 183V184M1409.5 183V184M1410.5 183V184M1411.5 183V184M1412.5 183V184M1413.5 183V184M1414.5 183V184M1415.5 183V184M1416.5 183V184M1417.5 183V184M1418.5 183V184M1419.5 183V184M1420.5 183V184M1421.5 183V184M1422.5 182V184M1423.5 182V183M1424.5 182V183M1425.5 182V183M1426.5 182V183M1427.5 182V184M1428.5 182V184M1429.5 182V184M1430.5 183V184M1431.5 183V184M1432.5 183V184M1433.5 183V184M1434.5 183V185M1435.5 183V184M1436.5 182V184M1437.5 182V183M1438.5 182V183M1439.5 182V184M1440.5 182V184M1441.5 183V184M1442.5 183V184M1443.5 183V184M1444.5 183V184M1445.5 182V184M1446.5 182V184M1447.5 182V184M1448.5 182V184M1449.5 183V185M1450.5 183V184M1451.5 183V184M1452.5 183V184M1453.5 183V184M1454.5 183V184M1455.5 183V184M1456.5 183V184M1457.5 183V184M1458.5 183V184M1459.5 183V184M1460.5 183V184M1461.5 183V184M1462.5 183V184M1463.5 182V184M1464.5 182V184M1465.5 182V183M1466.5 182V184M1467.5 182V184M1468.5 183V184M1469.5 183V184M1470.5 183V184M1471.5 182V184M1472.5 183V184M1473.5 183V184M1474.5 183V184M1475.5 183V184M1476.5 183V184M1477.5 183V184M1478.5 183V185M1479.5 183V184M1480.5 183V184M1481.5 183V184M1482.5 182V184M1483.5 183V184M1484.5 182V184M1485.5 182V184M1486.5 182V184M1487.5 182V184M1488.5 183V184M1489.5 183V184M1490.5 183V184M1491.5 182V184M1492.5 182V184M1493.5 182V184M1494.5 183V184M1495.5 183V184M1496.5 183V184M1497.5 183V184M1498.5 182V184M1499.5 183V184M1500.5 183V184M1501.5 183V185M1502.5 183V184M1503.5 183V184M1504.5 182V184M1505.5 183V184M1506.5 183V184M1507.5 183V184M1508.5 183V184M1509.5 183V184M1510.5 183V184M1511.5 183V184M1512.5 183V185M1513.5 184V185M1514.5 183V185M1515.5 183V185M1516.5 183V184M1517.5 183V184M1518.5 182V184M1519.5 182V184M1520.5 182V184M1521.5 182V183M1522.5 182V183M1523.5 182V183M1524.5 182V184M1525.5 182V194M1526.5 177V187M1527.5 178V182M1528.5 179V182M1529.5 179V181M1530.5 179V181M1531.5 179V182M1532.5 180V182M1533.5 180V183M1534.5 180V183M1535.5 180V183M1536.5 182V185M1537.5 183V184M1538.5 183V184M1539.5 183V185M1540.5 183V184M1541.5 183V184M1542.5 183V185M1543.5 183V184M1544.5 183V184M1545.5 183V185M1546.5 183V184M1547.5 183V184M1548.5 183V185M1549.5 183V184M1550.5 182V184M1551.5 182V183M1552.5 182V183M1553.5 182V183M1554.5 182V183M1555.5 182V184M1556.5 182V184M1557.5 182V184M1558.5 182V184M1559.5 182V184M1560.5 182V184M1561.5 183V184M1562.5 182V184M1563.5 182V184M1564.5 182V184M1565.5 182V184M1566.5 183V184M1567.5 183V184M1568.5 183V184M1569.5 182V184M1570.5 182V183M1571.5 182V183M1572.5 182V184M1573.5 182V184M1574.5 182V184M1575.5 182V184M1576.5 182V184M1577.5 182V184M1578.5 182V184M1579.5 183V184M1580.5 183V184M1581.5 183V184M1582.5 182V184M1583.5 182V184M1584.5 182V184M1585.5 182V184M1586.5 182V184M1587.5 182V184M1588.5 182V184M1589.5 183V184M1590.5 183V184M1591.5 183V184M1592.5 183V184M1593.5 183V184M1594.5 183V184M1595.5 183V184M1596.5 183V184M1597.5 182V184M1598.5 182V183M1599.5 182V183M1600.5 182V183M1601.5 182V183M1602.5 182V184M1603.5 183V184M1604.5 182V184M1605.5 183V184M1606.5 182V184M1607.5 182V184M1608.5 183V184M1609.5 183V184M1610.5 183V184" stroke="#3232c8" stroke-width="1" fill="none"/><path d="M156.5 181V188M157.5 195V198M158.5 190V193M159.5 182V185M160.5 178V181M161.5 175V177M162.5 173V174M163.5 171V172M686.5 182V183M691.5 182V183M693.5 180V184M694.5 180V181M695.5 182V186M696.5 186V190M697.5 180V184M698.5 180V181M699.5 182V188M700.5 181V190M701.5 173V180M702.5 176V182M703.5 183V196M704.5 182V193M705.5 177V181M706.5 178V184M707.5 185V191M708.5 182V187M709.5 168V181M710.5 175V181M711.5 182V200M712.5 183V196M713.5 178V182M714.5 179V183M715.5 184V187M716.5 183V185M717.5 177V182M718.5 177V180M719.5 181V186M720.5 186V188M721.5 180V184M722.5 180V181M723.5 182V184M724.5 184V185M725.5 179V183M726.5 178V180M727.5 181V184M728.5 186V187M729.5 181V183M731.5 182V183M733.5 178V183M734.5 177V180M735.5 181V185M736.5 187V188M737.5 181V184M739.5 181V185M740.5 182V184M741.5 178V181M742.5 179V184M743.5 169V191M744.5 157V169M745.5 172V192M746.5 204V219M747.5 163V201M748.5 162V168M749.5 169V198M750.5 200V210M751.5 147V199M752.5 159V177M753.5 178V225M754.5 192V222M755.5 163V191M756.5 171V183M757.5 184V206M758.5 146V208M759.5 156V175M760.5 176V217M761.5 192V220M762.5 163V191M763.5 148V157M764.5 162V202M765.5 222V234M766.5 162V202M767.5 145V157M768.5 165V199M769.5 214V232M770.5 138V221M771.5 149V168M772.5 169V223M773.5 192V234M774.5 157V191M775.5 164V179M776.5 180V213M777.5 185V207M778.5 164V184M779.5 165V176M780.5 177V202M781.5 156V208M782.5 138V147M783.5 160V204M784.5 214V241M785.5 154V210M786.5 139V155M787.5 163V201M788.5 220V236M789.5 144V220M790.5 137V160M791.5 161V215M792.5 215V242M793.5 150V214M794.5 148V164M795.5 165V215M796.5 149V231M797.5 133V148M798.5 157V193M799.5 194V238M800.5 180V211M801.5 154V179M802.5 167V181M803.5 182V210M804.5 183V202M805.5 162V182M806.5 165V179M807.5 180V203M808.5 188V204M809.5 155V187M810.5 147V164M811.5 165V207M812.5 207V228M813.5 175V190M814.5 162V174M815.5 172V182M816.5 183V205M817.5 174V198M818.5 170V173M819.5 176V188M820.5 191V198M821.5 151V195M822.5 154V172M823.5 173V211M824.5 202V226M825.5 159V201M826.5 162V174M827.5 175V210M828.5 160V212M829.5 147V159M830.5 162V197M831.5 198V229M832.5 164V210M833.5 142V163M834.5 166V198M835.5 200V226M836.5 152V212M837.5 151V161M838.5 162V203M839.5 167V223M840.5 144V166M841.5 160V179M842.5 180V224M843.5 183V212M844.5 165V182M845.5 163V172M846.5 173V199M847.5 195V208M848.5 163V194M849.5 145V160M850.5 165V199M851.5 216V229M852.5 177V196M853.5 156V176M854.5 172V192M855.5 200V214M856.5 167V197M857.5 162V166M858.5 173V191M859.5 196V208M860.5 164V200M861.5 158V167M862.5 168V196M863.5 205V216M864.5 161V203M865.5 149V165M866.5 166V199M867.5 216V227M868.5 177V195M869.5 144V176M870.5 168V196M871.5 205V228M872.5 178V201M873.5 157V177M874.5 171V192M875.5 193V213M876.5 182V201M877.5 162V181M878.5 148V163M879.5 164V200M880.5 209V224M881.5 151V208M882.5 167V183M883.5 184V217M884.5 184V207M885.5 172V183M886.5 177V182M887.5 183V197M888.5 183V192M889.5 171V182M890.5 175V181M891.5 182V195M892.5 181V192M893.5 168V180M894.5 173V179M895.5 180V186M896.5 190V193M897.5 197V199M898.5 182V189M899.5 180V181M901.5 180V181M902.5 182V185M904.5 178V186M905.5 168V174M906.5 173V179M907.5 180V184M908.5 186V193M909.5 196V199M910.5 180V188M911.5 178V179M912.5 178V179M913.5 180V183M914.5 184V188M915.5 188V190M916.5 182V185M918.5 171V180M919.5 169V176M920.5 177V187M921.5 191V193M922.5 197V199M923.5 182V192M924.5 177V181M925.5 177V179M926.5 180V182M927.5 183V187M929.5 183V186M930.5 180V182M932.5 168V176M933.5 173V179M934.5 180V182M935.5 183V190M936.5 196V199M937.5 182V189M938.5 179V181M940.5 180V182M941.5 183V186M942.5 188V189M943.5 183V185M944.5 176V182M945.5 167V170M946.5 176V182M947.5 183V188M948.5 193V197M949.5 189V196M950.5 179V185M952.5 179V180M953.5 181V184M954.5 188V190M955.5 186V189M956.5 181V183M957.5 175V180M958.5 167V171M959.5 177V182M960.5 183V187M961.5 191V196M962.5 191V197M963.5 179V185M965.5 178V180M966.5 181V184M967.5 187V190M968.5 177V187M969.5 179V181M970.5 182V184M971.5 166V183M972.5 164V173M973.5 174V200M974.5 190V211M975.5 174V189M976.5 173V177M977.5 178V187M978.5 169V190M979.5 158V169M980.5 170V194M981.5 203V211M982.5 154V202M983.5 153V169M984.5 170V212M985.5 203V225M986.5 154V202M987.5 158V171M988.5 172V208M989.5 174V216M990.5 148V173M991.5 162V185M992.5 186V226M993.5 148V216M994.5 147V158M995.5 159V205M996.5 215V228M997.5 168V196M998.5 155V162M999.5 171V193M1000.5 199V212M1001.5 167V197M1002.5 165V174M1003.5 175V191M1004.5 199V203M1005.5 180V188M1006.5 170V179M1007.5 176V182M1008.5 183V196M1009.5 183V192M1010.5 151V182M1011.5 169V189M1012.5 190V219M1013.5 182V204M1014.5 164V181M1015.5 171V182M1016.5 183V204M1017.5 170V199M1018.5 168V169M1019.5 174V190M1020.5 195V200M1021.5 172V192M1022.5 161V166M1023.5 173V191M1024.5 193V209M1025.5 168V197M1026.5 168V172M1027.5 173V191M1028.5 198V202M1029.5 168V196M1030.5 162V172M1031.5 173V194M1032.5 200V209M1033.5 164V199M1034.5 157V172M1035.5 173V201M1036.5 199V215M1037.5 166V198M1038.5 168V176M1039.5 177V199M1040.5 190V198M1041.5 165V189M1042.5 172V181M1043.5 182V195M1044.5 183V192M1045.5 169V182M1046.5 172V192M1047.5 174V195M1048.5 169V195M1049.5 170V194M1050.5 173V195M1051.5 172V195M1052.5 167V195M1053.5 168V196M1054.5 180V199M1055.5 170V195M1056.5 174V187M1057.5 174V195M1058.5 172V193M1059.5 172V193M1060.5 171V181M1061.5 172V191M1062.5 178V192M1063.5 175V190M1064.5 177V186M1065.5 173V192M1066.5 176V191M1067.5 173V191M1068.5 173V191M1069.5 173V191M1070.5 175V189M1071.5 173V191M1072.5 173V191M1073.5 171V193M1074.5 170V193M1075.5 171V188M1076.5 173V197M1077.5 166V201M1078.5 171V193M1079.5 168V196M1080.5 174V195M1081.5 166V192M1082.5 168V174M1083.5 175V194M1084.5 171V194M1085.5 174V184M1086.5 176V190M1087.5 176V190M1088.5 171V192M1089.5 174V190M1090.5 187V192M1091.5 177V187M1092.5 176V187M1093.5 176V188M1094.5 175V189M1095.5 173V191M1096.5 173V191M1097.5 176V191M1098.5 170V194M1099.5 171V193M1100.5 171V193M1101.5 178V188M1102.5 172V192M1103.5 171V187M1104.5 174V190M1105.5 176V188M1106.5 176V187M1107.5 177V187M1108.5 177V187M1109.5 175V189M1110.5 176V180M1111.5 177V187M1112.5 178V188M1113.5 176V188M1114.5 177V187M1115.5 180V186M1116.5 177V187M1117.5 177V184M1118.5 177V187M1119.5 178V186M1120.5 176V188M1121.5 175V188M1122.5 177V189M1123.5 173V191M1124.5 174V190M1125.5 171V186M1126.5 169V195M1127.5 188V195M1128.5 174V192M1129.5 170V194M1130.5 170V194M1131.5 172V192M1132.5 169V184M1133.5 174V184M1134.5 180V193M1135.5 177V192M1136.5 174V190M1137.5 173V191M1138.5 176V188M1139.5 176V188M1140.5 173V186M1141.5 175V189M1142.5 179V190M1143.5 177V187M1144.5 177V185M1145.5 177V187M1146.5 180V188M1147.5 175V185M1148.5 175V189M1149.5 190V193M1150.5 176V188M1151.5 173V191M1152.5 174V192M1153.5 174V190M1154.5 167V177M1155.5 172V192M1156.5 171V198M1157.5 172V192M1158.5 175V189M1159.5 175V193M1160.5 175V189M1161.5 172V192M1162.5 174V190M1163.5 186V190M1164.5 177V187M1165.5 178V186M1166.5 179V187M1167.5 179V187M1168.5 176V188M1169.5 177V187M1170.5 180V187M1171.5 178V186M1172.5 177V187M1173.5 178V186M1174.5 178V188M1175.5 175V180M1176.5 175V189M1177.5 180V188M1178.5 176V188M1179.5 175V189M1180.5 177V187M1181.5 175V190M1182.5 173V191M1183.5 177V187M1184.5 176V189M1185.5 175V189M1186.5 176V188M1187.5 177V188M1188.5 178V186M1189.5 175V183M1190.5 178V186M1191.5 181V186M1192.5 177V187M1193.5 179V185M1194.5 179V185M1195.5 178V186M1196.5 176V187M1197.5 178V186M1198.5 181V188M1199.5 178V187M1200.5 177V184M1201.5 178V186M1202.5 176V188M1203.5 176V188M1204.5 175V178M1205.5 175V189M1206.5 174V191M1207.5 175V189M1208.5 177V187M1209.5 177V190M1210.5 177V187M1211.5 176V188M1212.5 178V186M1213.5 179V185M1214.5 180V184M1215.5 180V184M1216.5 180V184M1217.5 180V184M1218.5 180V184M1219.5 180V183M1220.5 181V184M1221.5 182V184M1222.5 180V184M1223.5 181V183M1224.5 182V183M1225.5 180V184M1226.5 180V183M1227.5 181V184M1228.5 182V184M1229.5 181V184M1230.5 180V184M1231.5 181V184M1232.5 180V184M1233.5 179V185M1234.5 179V181M1235.5 180V184M1236.5 183V184M1237.5 180V184M1238.5 180V184M1239.5 182V184M1240.5 180V184M1241.5 180V184M1242.5 181V184M1243.5 182V184M1244.5 181V183M1245.5 182V183M1246.5 182V183M1247.5 182V183M1248.5 180V182M1249.5 181V184M1250.5 182V184M1251.5 180V184M1252.5 180V184M1253.5 181V183M1254.5 181V183M1255.5 181V183M1256.5 181V183M1258.5 182V183M1259.5 182V183M1260.5 182V183M1261.5 182V183M1525.5 183V189M1526.5 179V185M1527.5 179V181M1528.5 180V181M1531.5 180V181M1533.5 181V182M1534.5 181V182M1535.5 181V182M1536.5 183V184" stroke="#6464dc" stroke-width="1" fill="none"/><path d="M141.5 322V324M142.5 323V324M143.5 323V325M144.5 324V325M145.5 324V326M146.5 325V326M147.5 325V327M148.5 326V328M149.5 327V328M150.5 327V328M151.5 327V329M152.5 327V329M153.5 328V330M154.5 328V330M155.5 329V331M156.5 330V345M157.5 344V351M158.5 339V347M159.5 331V340M160.5 327V332M161.5 324V328M162.5 322V325M163.5 320V323M164.5 319V321M165.5 318V320M166.5 317V319M167.5 317V318M168.5 317V319M169.5 317V319M170.5 317V319M171.5 318V320M172.5 319V320M173.5 319V321M174.5 320V321M175.5 320V322M176.5 321V322M177.5 321V323M178.5 321V323M179.5 322V323M180.5 322V324M181.5 323V324M182.5 323V325M183.5 324V326M184.5 324V326M185.5 325V327M186.5 326V327M187.5 326V327M188.5 326V327M189.5 326V328M190.5 326V328M191.5 327V328M192.5 327V329M193.5 327V329M194.5 328V330M195.5 328V329M196.5 328V329M197.5 327V329M198.5 328V329M199.5 328V330M200.5 329V330M201.5 329V330M202.5 329V330M203.5 329V330M204.5 329V330M205.5 329V330M206.5 329V330M207.5 329V331M208.5 329V331M209.5 330V331M210.5 330V332M211.5 330V332M212.5 330V332M213.5 331V332M214.5 330V332M215.5 330V332M216.5 330V332M217.5 331V332M218.5 331V332M219.5 330V332M220.5 331V332M221.5 330V332M222.5 330V332M223.5 330V332M224.5 331V332M225.5 331V332M226.5 331V332M227.5 331V332M228.5 331V332M229.5 331V332M230.5 331V332M231.5 331V332M232.5 331V332M233.5 331V332M234.5 331V332M235.5 331V333M236.5 331V333M237.5 331V333M238.5 331V333M239.5 331V332M240.5 331V333M241.5 331V333M242.5 331V333M243.5 331V333M244.5 331V333M245.5 332V333M246.5 332V333M247.5 331V333M248.5 331V333M249.5 331V332M250.5 331V333M251.5 332V333M252.5 332V334M253.5 332V333M254.5 332V333M255.5 332V333M256.5 332V333M257.5 332V333M258.5 332V333M259.5 332V333M260.5 332V333M261.5 332V333M262.5 332V333M263.5 332V333M264.5 332V333M265.5 332V333M266.5 332V333M267.5 332V333M268.5 332V333M269.5 332V333M270.5 332V333M271.5 332V333M272.5 332V333M273.5 332V334M274.5 332V333M275.5 331V333M276.5 331V333M277.5 331V333M278.5 332V333M279.5 332V333M280.5 332V334M281.5 332V334M282.5 332V334M283.5 332V334M284.5 332V334M285.5 333V334M286.5 332V334M287.5 332V333M288.5 331V333M289.5 331V333M290.5 332V333M291.5 332V333M292.5 332V333M293.5 332V333M294.5 332V334M295.5 332V334M296.5 332V334M297.5 332V333M298.5 332V333M299.5 332V333M300.5 332V333M301.5 332V333M302.5 332V334M303.5 332V334M304.5 332V334M305.5 333V334M306.5 333V334M307.5 332V334M308.5 333V334M309.5 332V334M310.5 332V334M311.5 332V334M312.5 332V333M313.5 332V334M314.5 332V334M315.5 332V334M316.5 333V334M317.5 333V334M318.5 333V334M319.5 333V334M320.5 333V334M321.5 332V334M322.5 332V334M323.5 333V334M324.5 333V334M325.5 333V334M326.5 333V334M327.5 333V334M328.5 333V334M329.5 332V334M330.5 332V334M331.5 332V334M332.5 332V334M333.5 332V334M334.5 332V334M335.5 332V334M336.5 332V334M337.5 332V334M338.5 332V334M339.5 333V334M340.5 332V334M341.5 332V334M342.5 332V334M343.5 332V334M344.5 332V334M345.5 332V334M346.5 332V334M347.5 333V334M348.5 333V334M349.5 333V335M350.5 333V334M351.5 333V334M352.5 332V334M353.5 333V334M354.5 333V335M355.5 333V335M356.5 334V335M357.5 333V335M358.5 333V335M359.5 333V334M360.5 332V334M361.5 332V333M362.5 332V333M363.5 332V333M364.5 332V334M365.5 332V334M366.5 332V334M367.5 333V334M368.5 333V334M369.5 333V334M370.5 333V334M371.5 333V334M372.5 333V334M373.5 332V334M374.5 332V334M375.5 332V334M376.5 332V334M377.5 332V334M378.5 332V334M379.5 333V334M380.5 333V334M381.5 333V334M382.5 333V334M383.5 333V334M384.5 333V334M385.5 333V334M386.5 333V334M387.5 333V334M388.5 332V334M389.5 333V334M390.5 332V334M391.5 332V334M392.5 332V334M393.5 333V334M394.5 333V334M395.5 333V334M396.5 332V334M397.5 332V334M398.5 332V334M399.5 333V334M400.5 333V334M401.5 333V334M402.5 333V334M403.5 333V334M404.5 333V334M405.5 333V334M406.5 333V334M407.5 333V334M408.5 333V334M409.5 333V334M410.5 333V334M411.5 333V334M412.5 332V334M413.5 332V333M414.5 332V334M415.5 333V334M416.5 333V334M417.5 333V334M418.5 333V334M419.5 333V334M420.5 333V334M421.5 333V334M422.5 332V334M423.5 333V334M424.5 333V334M425.5 333V334M426.5 333V334M427.5 332V334M428.5 332V334M429.5 332V334M430.5 332V334M431.5 332V334M432.5 332V334M433.5 332V334M434.5 332V334M435.5 333V334M436.5 333V334M437.5 333V334M438.5 333V334M439.5 333V334M440.5 332V334M441.5 332V334M442.5 332V333M443.5 332V333M444.5 332V334M445.5 332V334M446.5 333V334M447.5 332V334M448.5 332V334M449.5 332V334M450.5 332V333M451.5 332V333M452.5 332V333M453.5 332V334M454.5 333V334M455.5 333V334M456.5 333V334M457.5 332V334M458.5 332V334M459.5 332V334M460.5 332V334M461.5 332V334M462.5 332V334M463.5 332V334M464.5 332V334M465.5 332V333M466.5 332V333M467.5 332V333M468.5 332V333M469.5 332V334M470.5 332V334M471.5 332V334M472.5 333V334M473.5 332V334M474.5 332V334M475.5 332V334M476.5 332V334M477.5 332V334M478.5 332V334M479.5 333V334M480.5 333V334M481.5 332V334M482.5 332V334M483.5 333V334M484.5 333V334M485.5 333V335M486.5 333V334M487.5 332V334M488.5 332V333M489.5 332V334M490.5 332V334M491.5 333V334M492.5 333V334M493.5 332V334M494.5 332V334M495.5 332V334M496.5 332V334M497.5 332V334M498.5 332V334M499.5 333V334M500.5 333V334M501.5 333V334M502.5 332V334M503.5 333V334M504.5 332V334M505.5 333V334M506.5 333V334M507.5 333V334M508.5 333V334M509.5 333V334M510.5 333V334M511.5 333V334M512.5 333V334M513.5 333V334M514.5 332V334M515.5 332V334M516.5 332V334M517.5 332V334M518.5 333V334M519.5 333V334M520.5 333V334M521.5 333V334M522.5 333V334M523.5 332V334M524.5 332V333M525.5 332V333M526.5 332V333M527.5 332V333M528.5 332V333M529.5 332V333M530.5 332V333M531.5 332V333M532.5 332V334M533.5 333V334M534.5 332V334M535.5 332V334M536.5 332V334M537.5 332V334M538.5 332V334M539.5 332V334M540.5 332V334M541.5 332V334M542.5 332V334M543.5 332V334M544.5 333V334M545.5 333V334M546.5 332V334M547.5 333V334M548.5 333V334M549.5 333V334M550.5 333V334M551.5 333V334M552.5 333V334M553.5 333V334M554.5 333V334M555.5 333V334M556.5 333V334M557.5 332V334M558.5 332V333M559.5 332V334M560.5 332V334M561.5 333V334M562.5 333V334M563.5 333V334M564.5 333V334M565.5 332V334M566.5 332V334M567.5 332V334M568.5 333V334M569.5 333V334M570.5 332V334M571.5 333V334M572.5 332V334M573.5 332V334M574.5 332V334M575.5 333V334M576.5 333V334M577.5 333V334M578.5 333V334M579.5 333V334M580.5 333V334M581.5 332V334M582.5 332V333M583.5 332V334M584.5 332V334M585.5 333V334M586.5 333V334M587.5 333V334M588.5 333V334M589.5 333V334M590.5 333V334M591.5 333V334M592.5 333V334M593.5 333V334M594.5 333V334M595.5 333V334M596.5 333V334M597.5 333V334M598.5 333V334M599.5 332V334M600.5 332V334M601.5 332V334M602.5 333V334M603.5 333V334M604.5 333V334M605.5 333V334M606.5 333V334M607.5 333V334M608.5 333V334M609.5 333V334M610.5 333V334M611.5 332V334M612.5 332V334M613.5 332V334M614.5 333V334M615.5 333V334M616.5 333V334M617.5 333V334M618.5 333V334M619.5 332V334M620.5 332V334M621.5 332V334M622.5 332V334M623.5 332V334M624.5 333V334M625.5 333V334M626.5 333V334M627.5 333V334M628.5 332V334M629.5 333V334M630.5 333V334M631.5 333V334M632.5 332V334M633.5 333V334M634.5 333V334M635.5 333V334M636.5 333V334M637.5 332V334M638.5 332V334M639.5 332V334M640.5 332V334M641.5 332V334M642.5 332V334M643.5 332V334M644.5 333V334M645.5 333V334M646.5 333V334M647.5 332V334M648.5 333V334M649.5 333V334M650.5 333V334M651.5 332V334M652.5 332V334M653.5 332V334M654.5 332V333M655.5 332V334M656.5 332V333M657.5 332V334M658.5 332V334M659.5 332V334M660.5 332V334M661.5 332V334M662.5 332V334M663.5 332V333M664.5 332V333M665.5 332V334M666.5 333V334M667.5 333V334M668.5 333V334M669.5 333V335M670.5 333V334M671.5 333V335M672.5 333V335M673.5 333V335M674.5 333V335M675.5 333V334M676.5 332V334M677.5 332V334M678.5 333V334M679.5 333V335M680.5 333V335M681.5 333V334M682.5 333V334M683.5 333V334M684.5 332V334M685.5 332V334M686.5 331V334M687.5 331V333M688.5 332V334M689.5 332V334M690.5 331V333M691.5 331V334M692.5 333V335M693.5 329V335M694.5 329V332M695.5 331V341M696.5 335V343M697.5 329V336M698.5 329V332M699.5 331V343M700.5 330V343M701.5 321V331M702.5 324V333M703.5 332V352M704.5 331V350M705.5 325V332M706.5 326V335M707.5 334V343M708.5 331V342M709.5 316V332M710.5 321V332M711.5 331V357M712.5 332V356M713.5 326V333M714.5 327V334M715.5 333V339M716.5 332V339M717.5 324V333M718.5 324V331M719.5 330V340M720.5 335V341M721.5 329V336M722.5 329V332M723.5 331V336M724.5 333V336M725.5 327V334M726.5 327V331M727.5 330V338M728.5 335V338M729.5 330V336M730.5 330V332M731.5 331V335M732.5 333V335M733.5 325V334M734.5 325V331M735.5 330V339M736.5 336V340M737.5 330V337M738.5 329V331M739.5 330V340M740.5 331V339M741.5 327V332M742.5 327V335M743.5 304V342M744.5 300V320M745.5 319V354M746.5 353V375M747.5 308V360M748.5 308V319M749.5 318V362M750.5 349V366M751.5 289V350M752.5 298V328M753.5 327V393M754.5 341V392M755.5 309V342M756.5 314V334M757.5 333V363M758.5 285V359M759.5 291V326M760.5 325V388M761.5 341V388M762.5 295V342M763.5 292V308M764.5 307V373M765.5 371V392M766.5 302V372M767.5 290V308M768.5 307V364M769.5 363V390M770.5 277V372M771.5 284V319M772.5 318V401M773.5 341V402M774.5 302V342M775.5 305V330M776.5 329V374M777.5 334V372M778.5 311V335M779.5 310V327M780.5 326V361M781.5 292V361M782.5 283V298M783.5 297V364M784.5 363V399M785.5 296V380M786.5 280V306M787.5 305V370M788.5 369V393M789.5 272V377M790.5 271V311M791.5 310V395M792.5 364V404M793.5 286V365M794.5 287V315M795.5 314V392M796.5 298V395M797.5 278V299M798.5 291V344M799.5 343V399M800.5 329V386M801.5 297V330M802.5 307V332M803.5 331V369M804.5 332V366M805.5 303V333M806.5 304V330M807.5 329V365M808.5 337V365M809.5 284V338M810.5 285V315M811.5 314V381M812.5 356V388M813.5 324V357M814.5 308V325M815.5 315V333M816.5 332V362M817.5 323V359M818.5 319V324M819.5 322V341M820.5 340V351M821.5 285V346M822.5 288V323M823.5 322V383M824.5 351V387M825.5 303V352M826.5 305V325M827.5 324V375M828.5 309V374M829.5 294V310M830.5 301V348M831.5 347V387M832.5 313V380M833.5 286V314M834.5 303V350M835.5 349V384M836.5 294V372M837.5 294V312M838.5 311V374M839.5 316V381M840.5 289V317M841.5 298V330M842.5 329V387M843.5 332V382M844.5 306V333M845.5 306V323M846.5 322V363M847.5 344V366M848.5 291V345M849.5 286V311M850.5 310V366M851.5 365V386M852.5 326V368M853.5 301V327M854.5 313V350M855.5 349V369M856.5 314V358M857.5 309V317M858.5 316V346M859.5 345V362M860.5 304V354M861.5 303V318M862.5 317V362M863.5 354V372M864.5 293V355M865.5 290V316M866.5 315V367M867.5 365V384M868.5 326V366M869.5 288V327M870.5 305V355M871.5 354V385M872.5 327V371M873.5 302V328M874.5 313V343M875.5 342V370M876.5 331V365M877.5 290V332M878.5 288V314M879.5 313V370M880.5 358V381M881.5 296V359M882.5 307V334M883.5 333V376M884.5 333V373M885.5 320V334M886.5 323V333M887.5 332V352M888.5 332V350M889.5 317V333M890.5 320V332M891.5 331V350M892.5 330V349M893.5 316V331M894.5 318V330M895.5 329V340M896.5 339V348M897.5 346V351M898.5 331V347M899.5 329V332M900.5 329V330M901.5 329V332M902.5 331V339M903.5 337V340M904.5 324V338M905.5 316V325M906.5 319V330M907.5 329V336M908.5 335V349M909.5 345V351M910.5 329V346M911.5 327V330M912.5 327V330M913.5 329V334M914.5 333V341M915.5 337V341M916.5 331V338M917.5 330V332M918.5 316V331M919.5 316V327M920.5 326V341M921.5 340V347M922.5 346V351M923.5 331V349M924.5 326V332M925.5 326V330M926.5 329V333M927.5 332V341M928.5 340V343M929.5 332V341M930.5 329V333M931.5 326V330M932.5 316V327M933.5 319V330M934.5 329V333M935.5 332V346M936.5 345V351M937.5 331V348M938.5 328V332M939.5 328V330M940.5 329V333M941.5 332V340M942.5 337V340M943.5 332V338M944.5 319V333M945.5 316V321M946.5 320V333M947.5 332V343M948.5 342V351M949.5 338V351M950.5 327V339M951.5 326V328M952.5 327V331M953.5 330V338M954.5 337V342M955.5 335V342M956.5 330V336M957.5 319V331M958.5 316V322M959.5 321V333M960.5 332V341M961.5 340V351M962.5 340V351M963.5 327V341M964.5 326V328M965.5 327V331M966.5 330V337M967.5 336V342M968.5 325V338M969.5 328V332M970.5 331V336M971.5 307V334M972.5 308V324M973.5 323V365M974.5 339V368M975.5 321V340M976.5 321V328M977.5 327V341M978.5 307V341M979.5 303V320M980.5 319V356M981.5 352V366M982.5 290V353M983.5 291V320M984.5 319V385M985.5 352V387M986.5 294V353M987.5 298V322M988.5 321V377M989.5 323V378M990.5 293V324M991.5 302V336M992.5 335V386M993.5 290V379M994.5 290V309M995.5 308V376M996.5 364V384M997.5 312V365M998.5 301V313M999.5 312V349M1000.5 348V367M1001.5 312V356M1002.5 310V325M1003.5 324V351M1004.5 348V356M1005.5 329V349M1006.5 317V330M1007.5 321V333M1008.5 332V351M1009.5 332V349M1010.5 295V333M1011.5 309V340M1012.5 339V378M1013.5 331V371M1014.5 309V332M1015.5 313V333M1016.5 332V362M1017.5 319V360M1018.5 317V320M1019.5 319V345M1020.5 344V353M1021.5 316V348M1022.5 308V317M1023.5 315V343M1024.5 342V364M1025.5 317V358M1026.5 316V323M1027.5 322V350M1028.5 347V355M1029.5 307V348M1030.5 306V323M1031.5 322V357M1032.5 349V364M1033.5 298V350M1034.5 297V323M1035.5 322V368M1036.5 348V373M1037.5 310V349M1038.5 311V327M1039.5 326V363M1040.5 339V353M1041.5 312V340M1042.5 316V332M1043.5 331V350M1044.5 332V349M1045.5 305V333M1046.5 319V351M1047.5 323V359M1048.5 318V359M1049.5 318V350M1050.5 322V358M1051.5 321V354M1052.5 310V346M1053.5 314V356M1054.5 329V356M1055.5 319V356M1056.5 318V338M1057.5 323V352M1058.5 321V348M1059.5 321V351M1060.5 314V332M1061.5 318V342M1062.5 327V350M1063.5 324V347M1064.5 321V337M1065.5 322V349M1066.5 325V349M1067.5 319V342M1068.5 320V344M1069.5 322V344M1070.5 322V345M1071.5 317V346M1072.5 322V348M1073.5 320V352M1074.5 311V344M1075.5 314V339M1076.5 322V355M1077.5 315V358M1078.5 318V347M1079.5 314V356M1080.5 323V359M1081.5 309V343M1082.5 310V325M1083.5 324V354M1084.5 320V353M1085.5 318V335M1086.5 325V346M1087.5 325V347M1088.5 317V343M1089.5 321V342M1090.5 336V348M1091.5 325V342M1092.5 323V338M1093.5 324V340M1094.5 323V344M1095.5 317V342M1096.5 319V344M1097.5 325V347M1098.5 319V354M1099.5 314V348M1100.5 318V346M1101.5 327V347M1102.5 315V347M1103.5 317V338M1104.5 317V343M1105.5 325V343M1106.5 322V338M1107.5 326V341M1108.5 326V343M1109.5 322V347M1110.5 322V331M1111.5 325V340M1112.5 327V342M1113.5 323V342M1114.5 324V341M1115.5 329V340M1116.5 324V341M1117.5 325V335M1118.5 326V343M1119.5 326V341M1120.5 322V341M1121.5 320V339M1122.5 326V347M1123.5 318V346M1124.5 320V345M1125.5 317V337M1126.5 317V356M1127.5 337V354M1128.5 323V350M1129.5 319V354M1130.5 319V351M1131.5 321V348M1132.5 310V335M1133.5 318V335M1134.5 329V350M1135.5 326V349M1136.5 320V343M1137.5 319V351M1138.5 325V343M1139.5 323V340M1140.5 319V337M1141.5 320V340M1142.5 328V345M1143.5 326V340M1144.5 323V336M1145.5 323V339M1146.5 329V343M1147.5 322V336M1148.5 322V347M1149.5 339V349M1150.5 322V341M1151.5 320V345M1152.5 323V347M1153.5 322V346M1154.5 312V328M1155.5 318V352M1156.5 320V355M1157.5 318V350M1158.5 322V344M1159.5 324V349M1160.5 323V344M1161.5 317V345M1162.5 322V341M1163.5 335V344M1164.5 324V341M1165.5 326V339M1166.5 328V342M1167.5 328V342M1168.5 324V339M1169.5 326V342M1170.5 329V341M1171.5 327V340M1172.5 324V342M1173.5 327V341M1174.5 327V343M1175.5 323V331M1176.5 324V344M1177.5 329V342M1178.5 320V341M1179.5 321V343M1180.5 326V340M1181.5 324V347M1182.5 317V343M1183.5 323V339M1184.5 325V345M1185.5 320V341M1186.5 323V341M1187.5 326V346M1188.5 325V339M1189.5 322V334M1190.5 324V338M1191.5 330V339M1192.5 326V341M1193.5 326V337M1194.5 328V338M1195.5 326V339M1196.5 324V338M1197.5 325V341M1198.5 330V342M1199.5 327V341M1200.5 325V335M1201.5 327V339M1202.5 324V344M1203.5 320V341M1204.5 320V329M1205.5 324V347M1206.5 323V346M1207.5 323V345M1208.5 325V340M1209.5 326V347M1210.5 326V341M1211.5 324V340M1212.5 327V341M1213.5 327V339M1214.5 328V335M1215.5 329V337M1216.5 329V336M1217.5 329V335M1218.5 329V335M1219.5 329V334M1220.5 330V335M1221.5 331V336M1222.5 329V336M1223.5 330V335M1224.5 331V335M1225.5 329V335M1226.5 329V334M1227.5 330V336M1228.5 331V337M1229.5 330V336M1230.5 329V336M1231.5 330V337M1232.5 329V336M1233.5 327V336M1234.5 328V332M1235.5 329V337M1236.5 332V337M1237.5 329V336M1238.5 329V336M1239.5 331V337M1240.5 329V335M1241.5 329V335M1242.5 330V335M1243.5 331V335M1244.5 330V334M1245.5 331V334M1246.5 331V335M1247.5 331V334M1248.5 329V333M1249.5 330V337M1250.5 331V337M1251.5 329V336M1252.5 329V335M1253.5 330V335M1254.5 330V334M1255.5 330V334M1256.5 330V334M1257.5 332V334M1258.5 331V334M1259.5 331V334M1260.5 331V334M1261.5 331V334M1262.5 332V333M1263.5 332V334M1264.5 333V334M1265.5 333V334M1266.5 333V334M1267.5 333V334M1268.5 333V334M1269.5 333V334M1270.5 332V334M1271.5 332V334M1272.5 332V334M1273.5 333V334M1274.5 333V334M1275.5 333V334M1276.5 333V335M1277.5 333V335M1278.5 333V334M1279.5 333V334M1280.5 333V334M1281.5 333V334M1282.5 333V334M1283.5 333V334M1284.5 333V334M1285.5 333V334M1286.5 333V334M1287.5 333V334M1288.5 333V334M1289.5 333V335M1290.5 333V334M1291.5 333V334M1292.5 333V334M1293.5 333V334M1294.5 333V334M1295.5 333V334M1296.5 333V334M1297.5 333V334M1298.5 333V334M1299.5 333V334M1300.5 333V334M1301.5 333V334M1302.5 333V334M1303.5 333V334M1304.5 333V334M1305.5 333V334M1306.5 333V334M1307.5 333V334M1308.5 333V334M1309.5 333V334M1310.5 333V334M1311.5 333V334M1312.5 333V334M1313.5 333V334M1314.5 333V334M1315.5 333V334M1316.5 333V334M1317.5 333V334M1318.5 333V334M1319.5 332V334M1320.5 333V334M1321.5 333V334M1322.5 333V334M1323.5 333V334M1324.5 333V334M1325.5 333V334M1326.5 333V334M1327.5 333V334M1328.5 333V334M1329.5 333V334M1330.5 333V334M1331.5 332V334M1332.5 333V334M1333.5 333V334M1334.5 333V334M1335.5 333V334M1336.5 332V334M1337.5 332V334M1338.5 332V334M1339.5 332V334M1340.5 332V334M1341.5 332V334M1342.5 332V334M1343.5 332V334M1344.5 332V334M1345.5 333V334M1346.5 332V334M1347.5 333V334M1348.5 333V334M1349.5 333V334M1350.5 333V334M1351.5 333V334M1352.5 333V334M1353.5 333V334M1354.5 333V334M1355.5 333V334M1356.5 333V334M1357.5 333V334M1358.5 333V335M1359.5 333V335M1360.5 333V335M1361.5 333V335M1362.5 333V335M1363.5 333V334M1364.5 333V334M1365.5 333V334M1366.5 333V334M1367.5 333V334M1368.5 333V334M1369.5 332V334M1370.5 332V334M1371.5 332V333M1372.5 332V334M1373.5 332V334M1374.5 332V334M1375.5 332V334M1376.5 332V334M1377.5 332V334M1378.5 332V334M1379.5 333V334M1380.5 333V334M1381.5 333V334M1382.5 333V334M1383.5 333V334M1384.5 332V334M1385.5 332V334M1386.5 332V333M1387.5 332V334M1388.5 332V334M1389.5 332V334M1390.5 332V334M1391.5 333V334M1392.5 333V334M1393.5 332V334M1394.5 333V334M1395.5 333V334M1396.5 333V334M1397.5 333V334M1398.5 333V334M1399.5 333V334M1400.5 333V334M1401.5 333V334M1402.5 333V334M1403.5 333V335M1404.5 333V334M1405.5 333V334M1406.5 333V334M1407.5 333V334M1408.5 333V334M1409.5 333V334M1410.5 333V334M1411.5 333V334M1412.5 333V334M1413.5 333V334M1414.5 333V334M1415.5 333V334M1416.5 333V334M1417.5 333V334M1418.5 333V334M1419.5 333V334M1420.5 333V334M1421.5 333V334M1422.5 332V334M1423.5 332V333M1424.5 332V333M1425.5 332V333M1426.5 332V333M1427.5 332V334M1428.5 332V334M1429.5 332V334M1430.5 333V334M1431.5 333V334M1432.5 333V334M1433.5 333V334M1434.5 333V335M1435.5 333V334M1436.5 332V334M1437.5 332V333M1438.5 332V333M1439.5 332V334M1440.5 332V334M1441.5 333V334M1442.5 333V334M1443.5 333V334M1444.5 333V334M1445.5 332V334M1446.5 332V334M1447.5 332V334M1448.5 332V334M1449.5 333V335M1450.5 333V334M1451.5 333V334M1452.5 333V334M1453.5 333V334M1454.5 333V334M1455.5 333V334M1456.5 333V334M1457.5 333V334M1458.5 333V334M1459.5 333V334M1460.5 333V334M1461.5 333V334M1462.5 333V334M1463.5 332V334M1464.5 332V334M1465.5 332V333M1466.5 332V334M1467.5 332V334M1468.5 333V334M1469.5 333V334M1470.5 333V334M1471.5 332V334M1472.5 333V334M1473.5 333V334M1474.5 333V334M1475.5 333V334M1476.5 333V334M1477.5 333V334M1478.5 333V335M1479.5 333V334M1480.5 333V334M1481.5 333V334M1482.5 332V334M1483.5 333V334M1484.5 332V334M1485.5 332V334M1486.5 332V334M1487.5 332V334M1488.5 333V334M1489.5 333V334M1490.5 333V334M1491.5 332V334M1492.5 332V334M1493.5 332V334M1494.5 333V334M1495.5 333V334M1496.5 333V334M1497.5 333V334M1498.5 332V334M1499.5 333V334M1500.5 333V334M1501.5 333V335M1502.5 333V334M1503.5 333V334M1504.5 332V334M1505.5 333V334M1506.5 333V334M1507.5 333V334M1508.5 333V334M1509.5 333V334M1510.5 333V334M1511.5 333V334M1512.5 333V335M1513.5 334V335M1514.5 333V335M1515.5 333V335M1516.5 333V334M1517.5 333V334M1518.5 332V334M1519.5 332V334M1520.5 332V334M1521.5 332V333M1522.5 332V333M1523.5 332V333M1524.5 332V334M1525.5 332V344M1526.5 327V337M1527.5 328V332M1528.5 329V332M1529.5 329V331M1530.5 329V331M1531.5 329V332M1532.5 330V332M1533.5 330V333M1534.5 330V333M1535.5 330V333M1536.5 332V335M1537.5 333V334M1538.5 333V334M1539.5 333V335M1540.5 333V334M1541.5 333V334M1542.5 333V335M1543.5 333V334M1544.5 333V334M1545.5 333V335M1546.5 333V334M1547.5 333V334M1548.5 333V335M1549.5 333V334M1550.5 332V334M1551.5 332V333M1552.5 332V333M1553.5 332V333M1554.5 332V333M1555.5 332V334M1556.5 332V334M1557.5 332V334M1558.5 332V334M1559.5 332V334M1560.5 332V334M1561.5 333V334M1562.5 332V334M1563.5 332V334M1564.5 332V334M1565.5 332V334M1566.5 333V334M1567.5 333V334M1568.5 333V334M1569.5 332V334M1570.5 332V333M1571.5 332V333M1572.5 332V334M1573.5 332V334M1574.5 332V334M1575.5 332V334M1576.5 332V334M1577.5 332V334M1578.5 332V334M1579.5 333V334M1580.5 333V334M1581.5 333V334M1582.5 332V334M1583.5 332V334M1584.5 332V334M1585.5 332V334M1586.5 332V334M1587.5 332V334M1588.5 332V334M1589.5 333V334M1590.5 333V334M1591.5 333V334M1592.5 333V334M1593.5 333V334M1594.5 333V334M1595.5 333V334M1596.5 333V334M1597.5 332V334M1598.5 332V333M1599.5 332V333M1600.5 332V333M1601.5 332V333M1602.5 332V334M1603.5 333V334M1604.5 332V334M1605.5 333V334M1606.5 332V334M1607.5 332V334M1608.5 333V334M1609.5 333V334M1610.5 333V334" stroke="#3232c8" stroke-width="1" fill="none"/><path d="M156.5 331V338M157.5 345V348M158.5 340V343M159.5 332V335M160.5 328V331M161.5 325V327M162.5 323V324M163.5 321V322M686.5 332V333M691.5 332V333M693.5 330V334M694.5 330V331M695.5 332V336M696.5 336V340M697.5 330V334M698.5 330V331M699.5 332V338M700.5 331V340M701.5 323V330M702.5 326V332M703.5 333V346M704.5 332V343M705.5 327V331M706.5 328V334M707.5 335V341M708.5 332V337M709.5 318V331M710.5 325V331M711.5 332V350M712.5 333V346M713.5 328V332M714.5 329V333M715.5 334V337M716.5 333V335M717.5 327V332M718.5 327V330M719.5 331V336M720.5 336V338M721.5 330V334M722.5 330V331M723.5 332V334M724.5 334V335M725.5 329V333M726.5 328V330M727.5 331V334M728.5 336V337M729.5 331V333M731.5 332V333M733.5 328V333M734.5 327V330M735.5 331V335M736.5 337V338M737.5 331V334M739.5 331V335M740.5 332V334M741.5 328V331M742.5 329V334M743.5 319V341M744.5 307V319M745.5 322V342M746.5 354V369M747.5 313V351M748.5 312V318M749.5 319V348M750.5 350V360M751.5 297V349M752.5 309V327M753.5 328V375M754.5 342V372M755.5 313V341M756.5 321V333M757.5 334V356M758.5 296V358M759.5 306V325M760.5 326V367M761.5 342V370M762.5 313V341M763.5 298V307M764.5 312V352M765.5 372V384M766.5 312V352M767.5 295V307M768.5 315V349M769.5 364V382M770.5 288V371M771.5 299V318M772.5 319V373M773.5 342V384M774.5 307V341M775.5 314V329M776.5 330V363M777.5 335V357M778.5 314V334M779.5 315V326M780.5 327V352M781.5 306V358M782.5 288V297M783.5 310V354M784.5 364V391M785.5 304V360M786.5 289V305M787.5 313V351M788.5 370V386M789.5 294V370M790.5 287V310M791.5 311V365M792.5 365V392M793.5 300V364M794.5 298V314M795.5 315V365M796.5 299V381M797.5 283V298M798.5 307V343M799.5 344V388M800.5 330V361M801.5 304V329M802.5 317V331M803.5 332V360M804.5 333V352M805.5 312V332M806.5 315V329M807.5 330V353M808.5 338V354M809.5 305V337M810.5 297V314M811.5 315V357M812.5 357V378M813.5 325V340M814.5 312V324M815.5 322V332M816.5 333V355M817.5 324V348M818.5 320V323M819.5 326V338M820.5 341V348M821.5 301V345M822.5 304V322M823.5 323V361M824.5 352V376M825.5 309V351M826.5 312V324M827.5 325V360M828.5 310V362M829.5 297V309M830.5 312V347M831.5 348V379M832.5 314V360M833.5 292V313M834.5 316V348M835.5 350V376M836.5 302V362M837.5 301V311M838.5 312V353M839.5 317V373M840.5 294V316M841.5 310V329M842.5 330V374M843.5 333V362M844.5 315V332M845.5 313V322M846.5 323V349M847.5 345V358M848.5 313V344M849.5 295V310M850.5 315V349M851.5 366V379M852.5 327V346M853.5 306V326M854.5 322V342M855.5 350V364M856.5 317V347M857.5 312V316M858.5 323V341M859.5 346V358M860.5 314V350M861.5 308V317M862.5 318V346M863.5 355V366M864.5 311V353M865.5 299V315M866.5 316V349M867.5 366V377M868.5 327V345M869.5 294V326M870.5 318V346M871.5 355V378M872.5 328V351M873.5 307V327M874.5 321V342M875.5 343V363M876.5 332V351M877.5 312V331M878.5 298V313M879.5 314V350M880.5 359V374M881.5 301V358M882.5 317V333M883.5 334V367M884.5 334V357M885.5 322V333M886.5 327V332M887.5 333V347M888.5 333V342M889.5 321V332M890.5 325V331M891.5 332V345M892.5 331V342M893.5 318V330M894.5 323V329M895.5 330V336M896.5 340V343M897.5 347V349M898.5 332V339M899.5 330V331M901.5 330V331M902.5 332V335M904.5 328V336M905.5 318V324M906.5 323V329M907.5 330V334M908.5 336V343M909.5 346V349M910.5 330V338M911.5 328V329M912.5 328V329M913.5 330V333M914.5 334V338M915.5 338V340M916.5 332V335M918.5 321V330M919.5 319V326M920.5 327V337M921.5 341V343M922.5 347V349M923.5 332V342M924.5 327V331M925.5 327V329M926.5 330V332M927.5 333V337M929.5 333V336M930.5 330V332M932.5 318V326M933.5 323V329M934.5 330V332M935.5 333V340M936.5 346V349M937.5 332V339M938.5 329V331M940.5 330V332M941.5 333V336M942.5 338V339M943.5 333V335M944.5 326V332M945.5 317V320M946.5 326V332M947.5 333V338M948.5 343V347M949.5 339V346M950.5 329V335M952.5 329V330M953.5 331V334M954.5 338V340M955.5 336V339M956.5 331V333M957.5 325V330M958.5 317V321M959.5 327V332M960.5 333V337M961.5 341V346M962.5 341V347M963.5 329V335M965.5 328V330M966.5 331V334M967.5 337V340M968.5 327V337M969.5 329V331M970.5 332V334M971.5 316V333M972.5 314V323M973.5 324V350M974.5 340V361M975.5 324V339M976.5 323V327M977.5 328V337M978.5 319V340M979.5 308V319M980.5 320V344M981.5 353V361M982.5 304V352M983.5 303V319M984.5 320V362M985.5 353V375M986.5 304V352M987.5 308V321M988.5 322V358M989.5 324V366M990.5 298V323M991.5 312V335M992.5 336V376M993.5 298V366M994.5 297V308M995.5 309V355M996.5 365V378M997.5 318V346M998.5 305V312M999.5 321V343M1000.5 349V362M1001.5 317V347M1002.5 315V324M1003.5 325V341M1004.5 349V353M1005.5 330V338M1006.5 320V329M1007.5 326V332M1008.5 333V346M1009.5 333V342M1010.5 301V332M1011.5 319V339M1012.5 340V369M1013.5 332V354M1014.5 314V331M1015.5 321V332M1016.5 333V354M1017.5 320V349M1018.5 318V319M1019.5 324V340M1020.5 345V350M1021.5 322V342M1022.5 311V316M1023.5 323V341M1024.5 343V359M1025.5 318V347M1026.5 318V322M1027.5 323V341M1028.5 348V352M1029.5 318V346M1030.5 312V322M1031.5 323V344M1032.5 350V359M1033.5 314V349M1034.5 307V322M1035.5 323V351M1036.5 349V365M1037.5 316V348M1038.5 318V326M1039.5 327V349M1040.5 340V348M1041.5 315V339M1042.5 322V331M1043.5 332V345M1044.5 333V342M1045.5 319V332M1046.5 322V342M1047.5 324V345M1048.5 319V345M1049.5 320V344M1050.5 323V345M1051.5 322V345M1052.5 317V345M1053.5 318V346M1054.5 330V349M1055.5 320V345M1056.5 324V337M1057.5 324V345M1058.5 322V343M1059.5 322V343M1060.5 321V331M1061.5 322V341M1062.5 328V342M1063.5 325V340M1064.5 327V336M1065.5 323V342M1066.5 326V341M1067.5 323V341M1068.5 323V341M1069.5 323V341M1070.5 325V339M1071.5 323V341M1072.5 323V341M1073.5 321V343M1074.5 320V343M1075.5 321V338M1076.5 323V347M1077.5 316V351M1078.5 321V343M1079.5 318V346M1080.5 324V345M1081.5 316V342M1082.5 318V324M1083.5 325V344M1084.5 321V344M1085.5 324V334M1086.5 326V340M1087.5 326V340M1088.5 321V342M1089.5 324V340M1090.5 337V342M1091.5 327V337M1092.5 326V337M1093.5 326V338M1094.5 325V339M1095.5 323V341M1096.5 323V341M1097.5 326V341M1098.5 320V344M1099.5 321V343M1100.5 321V343M1101.5 328V338M1102.5 322V342M1103.5 321V337M1104.5 324V340M1105.5 326V338M1106.5 326V337M1107.5 327V337M1108.5 327V337M1109.5 325V339M1110.5 326V330M1111.5 327V337M1112.5 328V338M1113.5 326V338M1114.5 327V337M1115.5 330V336M1116.5 327V337M1117.5 327V334M1118.5 327V337M1119.5 328V336M1120.5 326V338M1121.5 325V338M1122.5 327V339M1123.5 323V341M1124.5 324V340M1125.5 321V336M1126.5 319V345M1127.5 338V345M1128.5 324V342M1129.5 320V344M1130.5 320V344M1131.5 322V342M1132.5 319V334M1133.5 324V334M1134.5 330V343M1135.5 327V342M1136.5 324V340M1137.5 323V341M1138.5 326V338M1139.5 326V338M1140.5 323V336M1141.5 325V339M1142.5 329V340M1143.5 327V337M1144.5 327V335M1145.5 327V337M1146.5 330V338M1147.5 325V335M1148.5 325V339M1149.5 340V343M1150.5 326V338M1151.5 323V341M1152.5 324V342M1153.5 324V340M1154.5 317V327M1155.5 322V342M1156.5 321V348M1157.5 322V342M1158.5 325V339M1159.5 325V343M1160.5 325V339M1161.5 322V342M1162.5 324V340M1163.5 336V340M1164.5 327V337M1165.5 328V336M1166.5 329V337M1167.5 329V337M1168.5 326V338M1169.5 327V337M1170.5 330V337M1171.5 328V336M1172.5 327V337M1173.5 328V336M1174.5 328V338M1175.5 325V330M1176.5 325V339M1177.5 330V338M1178.5 326V338M1179.5 325V339M1180.5 327V337M1181.5 325V340M1182.5 323V341M1183.5 327V337M1184.5 326V339M1185.5 325V339M1186.5 326V338M1187.5 327V338M1188.5 328V336M1189.5 325V333M1190.5 328V336M1191.5 331V336M1192.5 327V337M1193.5 329V335M1194.5 329V335M1195.5 328V336M1196.5 326V337M1197.5 328V336M1198.5 331V338M1199.5 328V337M1200.5 327V334M1201.5 328V336M1202.5 326V338M1203.5 326V338M1204.5 325V328M1205.5 325V339M1206.5 324V341M1207.5 325V339M1208.5 327V337M1209.5 327V340M1210.5 327V337M1211.5 326V338M1212.5 328V336M1213.5 329V335M1214.5 330V334M1215.5 330V334M1216.5 330V334M1217.5 330V334M1218.5 330V334M1219.5 330V333M1220.5 331V334M1221.5 332V334M1222.5 330V334M1223.5 331V333M1224.5 332V333M1225.5 330V334M1226.5 330V333M1227.5 331V334M1228.5 332V334M1229.5 331V334M1230.5 330V334M1231.5 331V334M1232.5 330V334M1233.5 329V335M1234.5 329V331M1235.5 330V334M1236.5 333V334M1237.5 330V334M1238.5 330V334M1239.5 332V334M1240.5 330V334M1241.5 330V334M1242.5 331V334M1243.5 332V334M1244.5 331V333M1245.5 332V333M1246.5 332V333M1247.5 332V333M1248.5 330V332M1249.5 331V334M1250.5 332V334M1251.5 330V334M1252.5 330V334M1253.5 331V333M1254.5 331V333M1255.5 331V333M1256.5 331V333M1258.5 332V333M1259.5 332V333M1260.5 332V333M1261.5 332V333M1525.5 333V339M1526.5 329V335M1527.5 329V331M1528.5 330V331M1531.5 330V331M1533.5 331V332M1534.5 331V332M1535.5 331V332M1536.5 333V334" stroke="#6464dc" stroke-width="1" fill="none"/><path d="M140.5 111V254M140.5 261V404" stroke="#3232c8" stroke-width="1"/><path d="M140.5 115V165M140.5 264V330" stroke="#d8d860" stroke-width="1"/></svg>
<div id="seltb" class="a"></div>
<div class="grab" style="left:1px;top:424px;height:55px"></div>
<span class="sl" style="left:12px;top:430px;font-size:11.5px">Project Rate (Hz):</span>
<div class="a" style="left:13px;top:451px;width:78px;height:25px;border:1px solid #b4b4b2;border-radius:4px;background:linear-gradient(90deg,#fff 0,#fff 52px,#f0f0ef 52px,#e8e8e7 100%)"></div>
<div class="a" style="left:65px;top:452px;width:1px;height:23px;background:#c4c4c2"></div>
<span class="t" style="left:17px;top:457px;font-size:13px;color:#3c3c3c">16000</span>
<svg class="a" style="left:72px;top:459px" width="12" height="10"><path d="M2.5 2.5H9.5L6 8Z" fill="#707070"/></svg>
<div class="a" style="left:128px;top:451px;width:1px;height:25px;background:#d4d4d2"></div>
<div class="a" style="left:138px;top:456px;width:14px;height:14px;border:1px solid #9c9c9a;border-radius:2px;background:linear-gradient(#fafafa,#efefee)"></div>
<span class="sl" style="left:159px;top:456px;font-size:11.6px">Snap To</span>
<span class="sl" style="left:207px;top:430px;font-size:11.6px">Selection Start:</span>
<div class="a" style="left:369px;top:430px;width:14px;height:14px;border-radius:50%;background:radial-gradient(circle,#7a3e24 0,#7a3e24 2.6px,#f49a70 3.1px,#f08258 4.2px,#e8663a 5px);border:1px solid #d05a2c"></div>
<span class="sl" style="left:390px;top:430px;font-size:11.6px">End</span>
<div class="a" style="left:421px;top:430px;width:14px;height:14px;border-radius:50%;background:linear-gradient(#fff,#f0f0ef);border:1px solid #9c9c9a"></div>
<span class="sl" style="left:442px;top:430px;font-size:11.6px">Length</span>
<div class="a" style="left:525px;top:451px;width:1px;height:25px;background:#d4d4d2"></div>
<span class="sl" style="left:532px;top:430px;font-size:11.6px">Audio Position:</span>
<div class="a" style="left:207px;top:452px;width:153px;height:22px;border:1px solid #a8a8a8;background:#d3d3d3;box-shadow:inset 0 0 0 1px #f4f4f4"></div>
<div class="a" style="left:349px;top:454px;width:10px;height:18px;background:#d8d8d8;border-left:1px solid #f4f4f4;border-top:1px solid #f4f4f4;border-right:1px solid #8c8c8c;border-bottom:1px solid #8c8c8c"></div>
<svg class="a" style="left:350px;top:458px" width="8" height="8"><path d="M0.5 2H7.5L4 6.5Z" fill="#000"/></svg>
<span class="t" style="left:210.5px;top:456px;font-size:14px;color:#0000c8;letter-spacing:1.8px">00</span>
<span class="t" style="left:232.5px;top:456px;font-size:14px;color:#000;letter-spacing:0">h</span>
<span class="t" style="left:246px;top:456px;font-size:14px;color:#0000c8;letter-spacing:1.8px">00</span>
<span class="t" style="left:269.5px;top:456px;font-size:14px;color:#000;letter-spacing:0">m</span>
<span class="t" style="left:284.6px;top:456px;font-size:14px;color:#0000c8;letter-spacing:1.8px">00.000</span>
<span class="t" style="left:341.5px;top:456px;font-size:14px;color:#000;letter-spacing:0">s</span>
<div class="a" style="left:366px;top:452px;width:153px;height:22px;border:1px solid #a8a8a8;background:#d3d3d3;box-shadow:inset 0 0 0 1px #f4f4f4"></div>
<div class="a" style="left:508px;top:454px;width:10px;height:18px;background:#d8d8d8;border-left:1px solid #f4f4f4;border-top:1px solid #f4f4f4;border-right:1px solid #8c8c8c;border-bottom:1px solid #8c8c8c"></div>
<svg class="a" style="left:509px;top:458px" width="8" height="8"><path d="M0.5 2H7.5L4 6.5Z" fill="#000"/></svg>
<span class="t" style="left:369.5px;top:456px;font-size:14px;color:#0000c8;letter-spacing:1.8px">00</span>
<span class="t" style="left:391.5px;top:456px;font-size:14px;color:#000;letter-spacing:0">h</span>
<span class="t" style="left:405px;top:456px;font-size:14px;color:#0000c8;letter-spacing:1.8px">00</span>
<span class="t" style="left:428.5px;top:456px;font-size:14px;color:#000;letter-spacing:0">m</span>
<span class="t" style="left:443.6px;top:456px;font-size:14px;color:#0000c8;letter-spacing:1.8px">00.000</span>
<span class="t" style="left:500.5px;top:456px;font-size:14px;color:#000;letter-spacing:0">s</span>
<div class="a" style="left:532px;top:452px;width:153px;height:22px;border:1px solid #a8a8a8;background:#d3d3d3;box-shadow:inset 0 0 0 1px #f4f4f4"></div>
<div class="a" style="left:674px;top:454px;width:10px;height:18px;background:#d8d8d8;border-left:1px solid #f4f4f4;border-top:1px solid #f4f4f4;border-right:1px solid #8c8c8c;border-bottom:1px solid #8c8c8c"></div>
<svg class="a" style="left:675px;top:458px" width="8" height="8"><path d="M0.5 2H7.5L4 6.5Z" fill="#000"/></svg>
<span class="t" style="left:535.5px;top:456px;font-size:14px;color:#0000c8;letter-spacing:1.8px">00</span>
<span class="t" style="left:557.5px;top:456px;font-size:14px;color:#000;letter-spacing:0">h</span>
<span class="t" style="left:571px;top:456px;font-size:14px;color:#0000c8;letter-spacing:1.8px">00</span>
<span class="t" style="left:594.5px;top:456px;font-size:14px;color:#000;letter-spacing:0">m</span>
<span class="t" style="left:609.6px;top:456px;font-size:14px;color:#0000c8;letter-spacing:1.8px">00.000</span>
<span class="t" style="left:666.5px;top:456px;font-size:14px;color:#000;letter-spacing:0">s</span>
<div id="status" class="a"></div>
<div class="a" style="left:2px;top:482px;width:1464px;height:22px;border:1px solid #a8a8a6;border-bottom:none;border-right-color:#d8d8d6"></div>
<div class="a" style="left:1470px;top:482px;width:155px;height:22px;border:1px solid #a8a8a6;border-bottom:none"></div>
<span class="t" style="left:1473px;top:487px;font-size:14px;color:#3c3c3c;transform:scaleX(.92);transform-origin:0 0">Actual Rate: 16000</span>
<svg class="a" style="left:0;top:0" width="1627" height="505"><path d="M1622 492h1v1h-1ZM1622 495h1v1h-1ZM1619 495h1v1h-1ZM1622 498h1v1h-1ZM1619 498h1v1h-1ZM1616 498h1v1h-1ZM1622 501h1v1h-1ZM1619 501h1v1h-1ZM1616 501h1v1h-1ZM1613 501h1v1h-1Z" fill="#a8a8a6"/></svg>
</body></html>
